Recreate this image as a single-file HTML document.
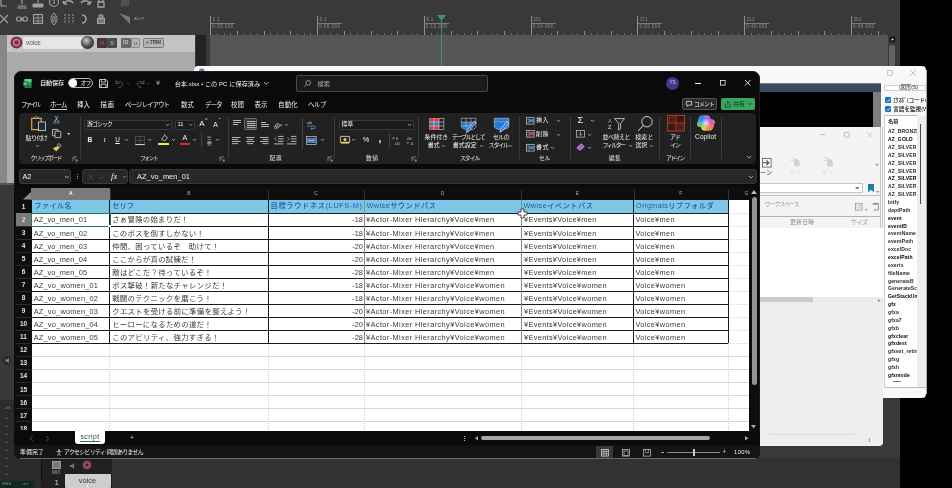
<!DOCTYPE html>
<html lang="ja"><head><meta charset="utf-8"><title>screen</title>
<style>
html,body{margin:0;padding:0;background:#000;}
body{width:952px;height:488px;overflow:hidden;position:relative;font-family:"Liberation Sans","Noto Sans CJK JP",sans-serif;}
#s{will-change:transform;position:absolute;left:0;top:0;width:952px;height:488px;overflow:hidden;background:#000;}
#s div,#s svg{position:absolute;box-sizing:border-box;}
#s svg{overflow:visible;}
</style></head><body><div id="s">
<div style="left:0.00px;top:0.00px;width:899.50px;height:488.00px;background:#393939;"></div>
<div style="left:210.00px;top:34.50px;width:677.80px;height:32.00px;background:#565656;"></div>
<div style="left:210.20px;top:16.00px;width:0.90px;height:18.70px;background:#909090;"></div>
<div style="top:16.55px;height:6.9px;line-height:6.9px;font-size:4.6px;color:#8e8e8e;white-space:pre;letter-spacing:0.370px;left:212.60px;">1.1</div>
<div style="top:23.85px;height:6.9px;line-height:6.9px;font-size:4.6px;color:#8e8e8e;white-space:pre;letter-spacing:0.451px;left:212.20px;">0:00.000</div>
<div style="left:210.60px;top:23.10px;width:24.50px;height:0.70px;background:#7c7c7c;"></div>
<div style="left:216.97px;top:32.60px;width:0.70px;height:2.10px;background:#6a6a6a;"></div>
<div style="left:223.65px;top:32.60px;width:0.70px;height:2.10px;background:#6a6a6a;"></div>
<div style="left:230.32px;top:32.60px;width:0.70px;height:2.10px;background:#6a6a6a;"></div>
<div style="left:237.00px;top:31.00px;width:0.70px;height:3.70px;background:#8a8a8a;"></div>
<div style="left:243.67px;top:32.60px;width:0.70px;height:2.10px;background:#6a6a6a;"></div>
<div style="left:250.35px;top:32.60px;width:0.70px;height:2.10px;background:#6a6a6a;"></div>
<div style="left:257.02px;top:32.60px;width:0.70px;height:2.10px;background:#6a6a6a;"></div>
<div style="left:263.70px;top:31.00px;width:0.70px;height:3.70px;background:#8a8a8a;"></div>
<div style="left:270.38px;top:32.60px;width:0.70px;height:2.10px;background:#6a6a6a;"></div>
<div style="left:277.05px;top:32.60px;width:0.70px;height:2.10px;background:#6a6a6a;"></div>
<div style="left:283.72px;top:32.60px;width:0.70px;height:2.10px;background:#6a6a6a;"></div>
<div style="left:290.40px;top:31.00px;width:0.70px;height:3.70px;background:#8a8a8a;"></div>
<div style="left:297.07px;top:32.60px;width:0.70px;height:2.10px;background:#6a6a6a;"></div>
<div style="left:303.75px;top:32.60px;width:0.70px;height:2.10px;background:#6a6a6a;"></div>
<div style="left:310.43px;top:32.60px;width:0.70px;height:2.10px;background:#6a6a6a;"></div>
<div style="left:317.00px;top:16.00px;width:0.90px;height:18.70px;background:#909090;"></div>
<div style="top:16.55px;height:6.9px;line-height:6.9px;font-size:4.6px;color:#8e8e8e;white-space:pre;letter-spacing:0.370px;left:319.40px;">5.1</div>
<div style="top:23.85px;height:6.9px;line-height:6.9px;font-size:4.6px;color:#8e8e8e;white-space:pre;letter-spacing:0.451px;left:319.00px;">0:08.000</div>
<div style="left:317.40px;top:23.10px;width:24.50px;height:0.70px;background:#7c7c7c;"></div>
<div style="left:323.77px;top:32.60px;width:0.70px;height:2.10px;background:#6a6a6a;"></div>
<div style="left:330.45px;top:32.60px;width:0.70px;height:2.10px;background:#6a6a6a;"></div>
<div style="left:337.12px;top:32.60px;width:0.70px;height:2.10px;background:#6a6a6a;"></div>
<div style="left:343.80px;top:31.00px;width:0.70px;height:3.70px;background:#8a8a8a;"></div>
<div style="left:350.47px;top:32.60px;width:0.70px;height:2.10px;background:#6a6a6a;"></div>
<div style="left:357.15px;top:32.60px;width:0.70px;height:2.10px;background:#6a6a6a;"></div>
<div style="left:363.82px;top:32.60px;width:0.70px;height:2.10px;background:#6a6a6a;"></div>
<div style="left:370.50px;top:31.00px;width:0.70px;height:3.70px;background:#8a8a8a;"></div>
<div style="left:377.17px;top:32.60px;width:0.70px;height:2.10px;background:#6a6a6a;"></div>
<div style="left:383.85px;top:32.60px;width:0.70px;height:2.10px;background:#6a6a6a;"></div>
<div style="left:390.52px;top:32.60px;width:0.70px;height:2.10px;background:#6a6a6a;"></div>
<div style="left:397.20px;top:31.00px;width:0.70px;height:3.70px;background:#8a8a8a;"></div>
<div style="left:403.87px;top:32.60px;width:0.70px;height:2.10px;background:#6a6a6a;"></div>
<div style="left:410.55px;top:32.60px;width:0.70px;height:2.10px;background:#6a6a6a;"></div>
<div style="left:417.22px;top:32.60px;width:0.70px;height:2.10px;background:#6a6a6a;"></div>
<div style="left:423.80px;top:16.00px;width:0.90px;height:18.70px;background:#909090;"></div>
<div style="top:16.55px;height:6.9px;line-height:6.9px;font-size:4.6px;color:#8e8e8e;white-space:pre;letter-spacing:0.370px;left:426.20px;">9.1</div>
<div style="top:23.85px;height:6.9px;line-height:6.9px;font-size:4.6px;color:#8e8e8e;white-space:pre;letter-spacing:0.451px;left:425.80px;">0:16.000</div>
<div style="left:424.20px;top:23.10px;width:24.50px;height:0.70px;background:#7c7c7c;"></div>
<div style="left:430.57px;top:32.60px;width:0.70px;height:2.10px;background:#6a6a6a;"></div>
<div style="left:437.25px;top:32.60px;width:0.70px;height:2.10px;background:#6a6a6a;"></div>
<div style="left:443.92px;top:32.60px;width:0.70px;height:2.10px;background:#6a6a6a;"></div>
<div style="left:450.60px;top:31.00px;width:0.70px;height:3.70px;background:#8a8a8a;"></div>
<div style="left:457.27px;top:32.60px;width:0.70px;height:2.10px;background:#6a6a6a;"></div>
<div style="left:463.95px;top:32.60px;width:0.70px;height:2.10px;background:#6a6a6a;"></div>
<div style="left:470.62px;top:32.60px;width:0.70px;height:2.10px;background:#6a6a6a;"></div>
<div style="left:477.30px;top:31.00px;width:0.70px;height:3.70px;background:#8a8a8a;"></div>
<div style="left:483.97px;top:32.60px;width:0.70px;height:2.10px;background:#6a6a6a;"></div>
<div style="left:490.65px;top:32.60px;width:0.70px;height:2.10px;background:#6a6a6a;"></div>
<div style="left:497.32px;top:32.60px;width:0.70px;height:2.10px;background:#6a6a6a;"></div>
<div style="left:504.00px;top:31.00px;width:0.70px;height:3.70px;background:#8a8a8a;"></div>
<div style="left:510.67px;top:32.60px;width:0.70px;height:2.10px;background:#6a6a6a;"></div>
<div style="left:517.35px;top:32.60px;width:0.70px;height:2.10px;background:#6a6a6a;"></div>
<div style="left:524.03px;top:32.60px;width:0.70px;height:2.10px;background:#6a6a6a;"></div>
<div style="left:530.60px;top:16.00px;width:0.90px;height:18.70px;background:#909090;"></div>
<div style="top:16.55px;height:6.9px;line-height:6.9px;font-size:4.6px;color:#8e8e8e;white-space:pre;letter-spacing:-0.363px;left:533.00px;">13.1</div>
<div style="top:23.85px;height:6.9px;line-height:6.9px;font-size:4.6px;color:#8e8e8e;white-space:pre;letter-spacing:0.451px;left:532.60px;">0:24.000</div>
<div style="left:531.00px;top:23.10px;width:24.50px;height:0.70px;background:#7c7c7c;"></div>
<div style="left:537.38px;top:32.60px;width:0.70px;height:2.10px;background:#6a6a6a;"></div>
<div style="left:544.05px;top:32.60px;width:0.70px;height:2.10px;background:#6a6a6a;"></div>
<div style="left:550.73px;top:32.60px;width:0.70px;height:2.10px;background:#6a6a6a;"></div>
<div style="left:557.40px;top:31.00px;width:0.70px;height:3.70px;background:#8a8a8a;"></div>
<div style="left:564.08px;top:32.60px;width:0.70px;height:2.10px;background:#6a6a6a;"></div>
<div style="left:570.75px;top:32.60px;width:0.70px;height:2.10px;background:#6a6a6a;"></div>
<div style="left:577.43px;top:32.60px;width:0.70px;height:2.10px;background:#6a6a6a;"></div>
<div style="left:584.10px;top:31.00px;width:0.70px;height:3.70px;background:#8a8a8a;"></div>
<div style="left:590.78px;top:32.60px;width:0.70px;height:2.10px;background:#6a6a6a;"></div>
<div style="left:597.45px;top:32.60px;width:0.70px;height:2.10px;background:#6a6a6a;"></div>
<div style="left:604.12px;top:32.60px;width:0.70px;height:2.10px;background:#6a6a6a;"></div>
<div style="left:610.80px;top:31.00px;width:0.70px;height:3.70px;background:#8a8a8a;"></div>
<div style="left:617.48px;top:32.60px;width:0.70px;height:2.10px;background:#6a6a6a;"></div>
<div style="left:624.15px;top:32.60px;width:0.70px;height:2.10px;background:#6a6a6a;"></div>
<div style="left:630.83px;top:32.60px;width:0.70px;height:2.10px;background:#6a6a6a;"></div>
<div style="left:637.40px;top:16.00px;width:0.90px;height:18.70px;background:#909090;"></div>
<div style="top:16.55px;height:6.9px;line-height:6.9px;font-size:4.6px;color:#8e8e8e;white-space:pre;letter-spacing:-0.363px;left:639.80px;">17.1</div>
<div style="top:23.85px;height:6.9px;line-height:6.9px;font-size:4.6px;color:#8e8e8e;white-space:pre;letter-spacing:0.451px;left:639.40px;">0:32.000</div>
<div style="left:637.80px;top:23.10px;width:24.50px;height:0.70px;background:#7c7c7c;"></div>
<div style="left:644.17px;top:32.60px;width:0.70px;height:2.10px;background:#6a6a6a;"></div>
<div style="left:650.85px;top:32.60px;width:0.70px;height:2.10px;background:#6a6a6a;"></div>
<div style="left:657.52px;top:32.60px;width:0.70px;height:2.10px;background:#6a6a6a;"></div>
<div style="left:664.20px;top:31.00px;width:0.70px;height:3.70px;background:#8a8a8a;"></div>
<div style="left:670.88px;top:32.60px;width:0.70px;height:2.10px;background:#6a6a6a;"></div>
<div style="left:677.55px;top:32.60px;width:0.70px;height:2.10px;background:#6a6a6a;"></div>
<div style="left:684.23px;top:32.60px;width:0.70px;height:2.10px;background:#6a6a6a;"></div>
<div style="left:690.90px;top:31.00px;width:0.70px;height:3.70px;background:#8a8a8a;"></div>
<div style="left:697.58px;top:32.60px;width:0.70px;height:2.10px;background:#6a6a6a;"></div>
<div style="left:704.25px;top:32.60px;width:0.70px;height:2.10px;background:#6a6a6a;"></div>
<div style="left:710.92px;top:32.60px;width:0.70px;height:2.10px;background:#6a6a6a;"></div>
<div style="left:717.60px;top:31.00px;width:0.70px;height:3.70px;background:#8a8a8a;"></div>
<div style="left:724.27px;top:32.60px;width:0.70px;height:2.10px;background:#6a6a6a;"></div>
<div style="left:730.95px;top:32.60px;width:0.70px;height:2.10px;background:#6a6a6a;"></div>
<div style="left:737.62px;top:32.60px;width:0.70px;height:2.10px;background:#6a6a6a;"></div>
<div style="left:744.20px;top:16.00px;width:0.90px;height:18.70px;background:#909090;"></div>
<div style="top:16.55px;height:6.9px;line-height:6.9px;font-size:4.6px;color:#8e8e8e;white-space:pre;letter-spacing:-0.363px;left:746.60px;">21.1</div>
<div style="top:23.85px;height:6.9px;line-height:6.9px;font-size:4.6px;color:#8e8e8e;white-space:pre;letter-spacing:0.451px;left:746.20px;">0:40.000</div>
<div style="left:744.60px;top:23.10px;width:24.50px;height:0.70px;background:#7c7c7c;"></div>
<div style="left:750.98px;top:32.60px;width:0.70px;height:2.10px;background:#6a6a6a;"></div>
<div style="left:757.65px;top:32.60px;width:0.70px;height:2.10px;background:#6a6a6a;"></div>
<div style="left:764.33px;top:32.60px;width:0.70px;height:2.10px;background:#6a6a6a;"></div>
<div style="left:771.00px;top:31.00px;width:0.70px;height:3.70px;background:#8a8a8a;"></div>
<div style="left:777.68px;top:32.60px;width:0.70px;height:2.10px;background:#6a6a6a;"></div>
<div style="left:784.35px;top:32.60px;width:0.70px;height:2.10px;background:#6a6a6a;"></div>
<div style="left:791.03px;top:32.60px;width:0.70px;height:2.10px;background:#6a6a6a;"></div>
<div style="left:797.70px;top:31.00px;width:0.70px;height:3.70px;background:#8a8a8a;"></div>
<div style="left:804.38px;top:32.60px;width:0.70px;height:2.10px;background:#6a6a6a;"></div>
<div style="left:811.05px;top:32.60px;width:0.70px;height:2.10px;background:#6a6a6a;"></div>
<div style="left:817.73px;top:32.60px;width:0.70px;height:2.10px;background:#6a6a6a;"></div>
<div style="left:824.40px;top:31.00px;width:0.70px;height:3.70px;background:#8a8a8a;"></div>
<div style="left:831.08px;top:32.60px;width:0.70px;height:2.10px;background:#6a6a6a;"></div>
<div style="left:837.75px;top:32.60px;width:0.70px;height:2.10px;background:#6a6a6a;"></div>
<div style="left:844.43px;top:32.60px;width:0.70px;height:2.10px;background:#6a6a6a;"></div>
<div style="left:851.00px;top:16.00px;width:0.90px;height:18.70px;background:#909090;"></div>
<div style="top:16.55px;height:6.9px;line-height:6.9px;font-size:4.6px;color:#8e8e8e;white-space:pre;letter-spacing:-0.363px;left:853.40px;">25.1</div>
<div style="top:23.85px;height:6.9px;line-height:6.9px;font-size:4.6px;color:#8e8e8e;white-space:pre;letter-spacing:0.451px;left:853.00px;">0:48.000</div>
<div style="left:851.40px;top:23.10px;width:24.50px;height:0.70px;background:#7c7c7c;"></div>
<div style="left:857.77px;top:32.60px;width:0.70px;height:2.10px;background:#6a6a6a;"></div>
<div style="left:864.45px;top:32.60px;width:0.70px;height:2.10px;background:#6a6a6a;"></div>
<div style="left:871.12px;top:32.60px;width:0.70px;height:2.10px;background:#6a6a6a;"></div>
<div style="left:877.80px;top:31.00px;width:0.70px;height:3.70px;background:#8a8a8a;"></div>
<div style="left:884.48px;top:32.60px;width:0.70px;height:2.10px;background:#6a6a6a;"></div>
<div style="left:440.60px;top:19.00px;width:1.00px;height:47.50px;background:#3f8f7c;"></div>
<svg style="left:436.50px;top:15.00px;" width="9" height="6" viewBox="0 0 9 6"><polygon points="0,0 9,0 4.5,6" fill="#3f8f7c"/></svg>
<div style="left:889.00px;top:45.00px;width:6.00px;height:21.50px;background:#626262;border-radius:2px 2px 0 0;"></div>
<svg style="left:888.50px;top:35.80px;" width="7" height="7" viewBox="0 0 7 7"><circle cx="3.5" cy="3.5" r="2.9" fill="#111"/><circle cx="3.5" cy="3.5" r="1.1" fill="#e8e8e8"/></svg>
<div style="left:195.50px;top:34.50px;width:10.00px;height:32.00px;background:#222;"></div>
<div style="left:0.00px;top:34.50px;width:7.00px;height:150.00px;background:#878787;"></div>
<div style="left:6.70px;top:34.50px;width:188.80px;height:150.00px;background:#a9abab;"></div>
<div style="left:6.70px;top:34.50px;width:188.80px;height:17.50px;background:#c3c5c5;"></div>
<div style="left:0.00px;top:184.50px;width:15.00px;height:304.00px;background:#383838;"></div>
<div style="left:0.00px;top:182.50px;width:15.00px;height:2.00px;background:#555;"></div>
<svg style="left:9.50px;top:35.50px;" width="13" height="13" viewBox="0 0 13 13"><circle cx="6.5" cy="6.5" r="6" fill="#7d2f45"/><circle cx="6.5" cy="6.5" r="3" fill="none" stroke="#c9809a" stroke-width="1.3"/></svg>
<div style="left:22.50px;top:37.00px;width:61.00px;height:12.00px;background:#e6e6e6;border-radius:1px;"></div>
<div style="top:38.20px;height:9.6px;line-height:9.6px;font-size:6.4px;color:#555;white-space:pre;left:26.00px;">voice</div>
<svg style="left:80.50px;top:35.50px;" width="13" height="13" viewBox="0 0 13 13"><defs><radialGradient id="kn" cx="0.4" cy="0.35" r="0.7"><stop offset="0" stop-color="#cfcfcf"/><stop offset="0.5" stop-color="#6a6a6a"/><stop offset="1" stop-color="#222"/></radialGradient></defs><circle cx="6.5" cy="6.5" r="6.2" fill="url(#kn)" stroke="#333" stroke-width="0.6"/></svg>
<div style="left:97.00px;top:37.50px;width:9.50px;height:10.50px;background:#3a3a3a;border-radius:1px;"></div>
<div style="top:38.88px;height:8.25px;line-height:8.25px;font-size:5.5px;color:#c0304a;white-space:pre;font-weight:700;left:99.40px;">M</div>
<div style="left:107.00px;top:37.50px;width:10.00px;height:10.50px;background:#4a4a4a;border-radius:1px;"></div>
<div style="top:38.88px;height:8.25px;line-height:8.25px;font-size:5.5px;color:#aaa;white-space:pre;font-weight:700;left:110.16px;">S</div>
<div style="left:121.00px;top:37.50px;width:9.50px;height:10.50px;background:#666;border-radius:1px;"></div>
<div style="top:39.25px;height:7.5px;line-height:7.5px;font-size:5px;color:#ccc;white-space:pre;font-weight:700;left:123.06px;">IO</div>
<div style="left:131.00px;top:37.50px;width:9.00px;height:10.50px;background:#b5b5b5;border-radius:1px;border:0.5px solid #888;"></div>
<div style="top:38.88px;height:8.25px;line-height:8.25px;font-size:5.5px;color:#444;white-space:pre;left:133.97px;">u</div>
<div style="left:143.00px;top:37.50px;width:20.50px;height:10.50px;background:#b5b5b5;border-radius:1.5px;border:0.6px solid #777;"></div>
<div style="top:39.55px;height:6.9px;line-height:6.9px;font-size:4.6px;color:#444;white-space:pre;font-weight:700;left:145.29px;">∧TRIM</div>
<svg style="left:-1.00px;top:-1.80px;" width="12" height="12" viewBox="0 0 12 12"><path d="M2 0v8h6" fill="none" stroke="#a2a2a2" stroke-width="1.2"/></svg>
<svg style="left:16.00px;top:-1.80px;" width="12" height="12" viewBox="0 0 12 12"><path d="M6 0v6M2 8h8M1 10h10" fill="none" stroke="#a2a2a2" stroke-width="1.2"/></svg>
<svg style="left:32.00px;top:-1.80px;" width="12" height="12" viewBox="0 0 12 12"><path d="M6 0v5M1 9h10v-3h-10z" fill="#a2a2a2" stroke="#a2a2a2" stroke-width="1"/></svg>
<svg style="left:47.50px;top:-1.80px;" width="12" height="12" viewBox="0 0 12 12"><circle cx="6" cy="4" r="4.5" fill="none" stroke="#a2a2a2" stroke-width="1.1"/><path d="M6 2v4" stroke="#a2a2a2" stroke-width="1.2"/></svg>
<svg style="left:62.00px;top:-1.80px;" width="12" height="12" viewBox="0 0 12 12"><path d="M2 6c1-4 7-4 9-1M2 6l-1-3M2 6l3 0" fill="none" stroke="#a2a2a2" stroke-width="1.5"/></svg>
<svg style="left:80.00px;top:-1.80px;" width="12" height="12" viewBox="0 0 12 12"><path d="M10 6c-1-4-7-4-9-1M10 6l1-3M10 6l-3 0" fill="none" stroke="#a2a2a2" stroke-width="1.5"/></svg>
<svg style="left:94.50px;top:-1.80px;" width="12" height="12" viewBox="0 0 12 12"><path d="M3 4h6v5h-6zM4 4v-2a2 2 0 0 1 4 0v2" fill="none" stroke="#a2a2a2" stroke-width="1.3"/></svg>
<svg style="left:118.50px;top:-1.80px;" width="12" height="12" viewBox="0 0 12 12"><rect x="2" y="0" width="8" height="8" fill="#5a5a5a"/><path d="M2 3h8M2 6h8M5 0v8M8 0v8" stroke="#444" stroke-width="0.6"/></svg>
<svg style="left:0.00px;top:13.30px;" width="12" height="12" viewBox="0 0 12 12"><path d="M0 2l8 8M8 2l-8 8" stroke="#a2a2a2" stroke-width="1.1" fill="none"/></svg>
<svg style="left:16.00px;top:13.00px;" width="12" height="12" viewBox="0 0 12 12"><rect x="0.5" y="4" width="5" height="4" rx="2" fill="none" stroke="#a2a2a2" stroke-width="1.1"/><rect x="6.5" y="4" width="5" height="4" rx="2" fill="none" stroke="#a2a2a2" stroke-width="1.1"/><path d="M4 6h4" stroke="#a2a2a2" stroke-width="1"/></svg>
<svg style="left:32.00px;top:13.00px;" width="12" height="12" viewBox="0 0 12 12"><rect x="1.5" y="1.5" width="9" height="9" fill="none" stroke="#a2a2a2" stroke-width="1.1"/><path d="M1.5 5h9M1.5 8h9M6 1.5v9" stroke="#a2a2a2" stroke-width="0.9"/></svg>
<svg style="left:47.50px;top:13.30px;" width="12" height="12" viewBox="0 0 12 12"><path d="M6 0l-3 4h6zM6 12l-3-4h6zM2 6h8" fill="none" stroke="#a2a2a2" stroke-width="1"/></svg>
<svg style="left:62.50px;top:13.30px;" width="12" height="12" viewBox="0 0 12 12"><path d="M2 1v10M6 1v10M10 1v10" stroke="#a2a2a2" stroke-width="1" stroke-dasharray="2 1.2"/></svg>
<svg style="left:78.00px;top:13.00px;" width="12" height="12" viewBox="0 0 12 12"><path d="M4 2a4 4 0 1 1 0 8" fill="none" stroke="#a2a2a2" stroke-width="1.6"/></svg>
<svg style="left:94.50px;top:13.30px;" width="12" height="12" viewBox="0 0 12 12"><path d="M2.5 5.5h7v5h-7zM4 5.5v-2a2 2 0 0 1 4 0v2" fill="#a2a2a2" stroke="#a2a2a2" stroke-width="1.1" fill-opacity="0.6"/></svg>
<svg style="left:119.00px;top:13.30px;" width="12" height="12" viewBox="0 0 12 12"><path d="M0 0l11 4v7z" fill="#777"/></svg>
<div style="top:16.00px;height:6.6px;line-height:6.6px;font-size:4.4px;color:#9a9a9a;white-space:pre;letter-spacing:0.246px;left:134.00px;">ADIT</div>
<div style="left:0.00px;top:458.00px;width:899.50px;height:30.00px;background:#323232;"></div>
<div style="left:0.00px;top:458.00px;width:41.00px;height:30.00px;background:#2a2a2a;"></div>
<div style="left:41.00px;top:458.00px;width:71.00px;height:30.00px;background:#202020;"></div>
<div style="left:40.80px;top:459.00px;width:1.00px;height:21.00px;background:#0c0c0c;"></div>
<div style="left:51.50px;top:460.50px;width:9.00px;height:8.00px;background:#7a7a7a;border:0.6px solid #999;"></div>
<div style="top:469.85px;height:6.9px;line-height:6.9px;font-size:4.6px;color:#a8a8a8;white-space:pre;letter-spacing:0.109px;left:52.05px;">MIX</div>
<div style="top:477.30px;height:12.0px;line-height:12.0px;font-size:8px;color:#cfcfcf;white-space:pre;left:54.57px;">1</div>
<svg style="left:70.00px;top:462.50px;" width="6" height="6" viewBox="0 0 6 6"><path d="M0 2h2l2-2v6l-2-2h-2z" fill="#777"/></svg>
<svg style="left:82.00px;top:460.00px;" width="10" height="10" viewBox="0 0 10 10"><circle cx="5" cy="5" r="4.6" fill="#7a3a52"/><circle cx="5" cy="5" r="2.3" fill="#3a1a26" stroke="#b07a90" stroke-width="1"/></svg>
<div style="left:65.00px;top:474.00px;width:46.00px;height:14.00px;background:#cdcdcd;border-radius:1px;"></div>
<div style="left:86.50px;top:485.30px;width:1.60px;height:1.60px;background:#fff;border-radius:1px;"></div>
<div style="top:475.05px;height:11.1px;line-height:11.1px;font-size:7.4px;color:#3a3a3a;white-space:pre;letter-spacing:-0.013px;left:78.80px;">voice</div>
<div style="left:0.00px;top:480.50px;width:34.00px;height:7.50px;background:#12281f;"></div>
<div style="top:481.15px;height:6.3px;line-height:6.3px;font-size:4.2px;color:#3fae7c;white-space:pre;left:2.00px;">RMS</div>
<div style="top:481.15px;height:6.3px;line-height:6.3px;font-size:4.2px;color:#3fae7c;white-space:pre;left:22.00px;">-inf</div>
<svg style="left:1.50px;top:355.50px;" width="9" height="9" viewBox="0 0 9 9"><circle cx="4.5" cy="4.5" r="4" fill="#222"/><path d="M3 2.5v4M6.5 2.5l-2.5 2l2.5 2z" stroke="#999" fill="#999" stroke-width="0.6"/></svg>
<div style="left:0.00px;top:400.00px;width:15.00px;height:58.00px;background:#2b2b2b;"></div>
<div style="top:406.30px;height:5.4px;line-height:5.4px;font-size:3.6px;color:#8a8a8a;white-space:pre;left:5.00px;">-inf</div>
<div style="top:414.62px;height:6.75px;line-height:6.75px;font-size:4.5px;color:#6a6a6a;white-space:pre;left:1.50px;">-</div>
<div style="left:5.00px;top:417.70px;width:2.50px;height:0.60px;background:#5a5a5a;"></div>
<div style="top:422.62px;height:6.75px;line-height:6.75px;font-size:4.5px;color:#6a6a6a;white-space:pre;left:1.50px;">-</div>
<div style="left:5.00px;top:425.70px;width:2.50px;height:0.60px;background:#5a5a5a;"></div>
<div style="top:430.62px;height:6.75px;line-height:6.75px;font-size:4.5px;color:#6a6a6a;white-space:pre;left:1.50px;">-</div>
<div style="left:5.00px;top:433.70px;width:2.50px;height:0.60px;background:#5a5a5a;"></div>
<div style="top:438.62px;height:6.75px;line-height:6.75px;font-size:4.5px;color:#6a6a6a;white-space:pre;left:1.50px;">-</div>
<div style="left:5.00px;top:441.70px;width:2.50px;height:0.60px;background:#5a5a5a;"></div>
<div style="top:446.62px;height:6.75px;line-height:6.75px;font-size:4.5px;color:#6a6a6a;white-space:pre;left:1.50px;">-</div>
<div style="left:5.00px;top:449.70px;width:2.50px;height:0.60px;background:#5a5a5a;"></div>
<div style="top:454.62px;height:6.75px;line-height:6.75px;font-size:4.5px;color:#6a6a6a;white-space:pre;left:1.50px;">-</div>
<div style="left:5.00px;top:457.70px;width:2.50px;height:0.60px;background:#5a5a5a;"></div>
<div style="top:462.62px;height:6.75px;line-height:6.75px;font-size:4.5px;color:#6a6a6a;white-space:pre;left:1.50px;">-</div>
<div style="left:5.00px;top:465.70px;width:2.50px;height:0.60px;background:#5a5a5a;"></div>
<div style="top:470.62px;height:6.75px;line-height:6.75px;font-size:4.5px;color:#6a6a6a;white-space:pre;left:1.50px;">-</div>
<div style="left:5.00px;top:473.70px;width:2.50px;height:0.60px;background:#5a5a5a;"></div>
<div style="left:193.80px;top:66.00px;width:732.20px;height:332.30px;background:#f8f8f8;border-radius:4px 4px 4px 4px;"></div>
<svg style="left:199.00px;top:68.40px;" width="5.4" height="3" viewBox="0 0 5.4 3"><ellipse cx="2.7" cy="2.4" rx="2.7" ry="1.8" fill="#5a7fb4"/></svg>
<svg style="left:886.50px;top:70.00px;" width="6" height="6" viewBox="0 0 6 6"><rect x="0.5" y="0.5" width="5" height="5" rx="0.8" fill="none" stroke="#b5b5b5" stroke-width="0.8"/></svg>
<svg style="left:910.00px;top:70.00px;" width="6" height="6" viewBox="0 0 6 6"><path d="M0 0l6 6M6 0l-6 6" stroke="#b5b5b5" stroke-width="0.8"/></svg>
<div style="left:759.00px;top:83.40px;width:121.50px;height:8.40px;background:#3b4a5e;border-top:1.2px solid #76869a;"></div>
<div style="left:759.00px;top:91.80px;width:114.00px;height:34.80px;background:#000;"></div>
<div style="left:873.00px;top:91.80px;width:7.50px;height:34.80px;background:#7d7d7d;"></div>
<div style="left:884.00px;top:84.70px;width:42.00px;height:6.80px;background:#fdfdfd;border:0.6px solid #cfcfcf;border-radius:1px;"></div>
<div style="top:84.20px;height:7.8px;line-height:7.8px;font-size:5.2px;color:#222;white-space:pre;letter-spacing:-0.005px;left:899.10px;">(図形(S)</div>
<div style="left:884.70px;top:96.60px;width:6.60px;height:6.60px;background:#1b6ec2;border-radius:1.2px;"></div>
<svg style="left:885.70px;top:97.70px;" width="4.6" height="4.4" viewBox="0 0 4.6 4.4"><path d="M0.6 2.3l1.3 1.3l2.2-2.8" fill="none" stroke="#fff" stroke-width="0.8"/></svg>
<div style="top:95.70px;height:8.4px;line-height:8.4px;font-size:5.6px;color:#111;white-space:pre;font-weight:500;letter-spacing:-0.112px;left:893.20px;">ｴｸｽﾎﾟ(コード(P</div>
<div style="left:884.70px;top:105.80px;width:6.60px;height:6.60px;background:#1b6ec2;border-radius:1.2px;"></div>
<svg style="left:885.70px;top:106.90px;" width="4.6" height="4.4" viewBox="0 0 4.6 4.4"><path d="M0.6 2.3l1.3 1.3l2.2-2.8" fill="none" stroke="#fff" stroke-width="0.8"/></svg>
<div style="top:104.90px;height:8.4px;line-height:8.4px;font-size:5.6px;color:#111;white-space:pre;font-weight:500;letter-spacing:0.002px;left:893.20px;">言語を監視(W)</div>
<div style="left:884.30px;top:115.30px;width:32.50px;height:272.00px;background:#fff;border-top:0.6px solid #bbb;border-left:0.6px solid #ccc;"></div>
<div style="top:118.12px;height:7.35px;line-height:7.35px;font-size:4.9px;color:#111;white-space:pre;font-weight:700;letter-spacing:0.002px;left:888.30px;">名前</div>
<div style="top:128.25px;height:7.5px;line-height:7.5px;font-size:5.0px;color:#2a2a2a;white-space:pre;font-weight:700;left:888.00px;letter-spacing:0.14px;">AZ_BRONZE</div>
<div style="top:136.11px;height:7.5px;line-height:7.5px;font-size:5.0px;color:#000;white-space:pre;font-weight:700;left:888.00px;letter-spacing:0.14px;">AZ_GOLD</div>
<div style="top:143.97px;height:7.5px;line-height:7.5px;font-size:5.0px;color:#2a2a2a;white-space:pre;font-weight:700;left:888.00px;letter-spacing:0.14px;">AZ_SILVER</div>
<div style="top:151.83px;height:7.5px;line-height:7.5px;font-size:5.0px;color:#2a2a2a;white-space:pre;font-weight:700;left:888.00px;letter-spacing:0.14px;">AZ_SILVER</div>
<div style="top:159.69px;height:7.5px;line-height:7.5px;font-size:5.0px;color:#2a2a2a;white-space:pre;font-weight:700;left:888.00px;letter-spacing:0.14px;">AZ_SILVER</div>
<div style="top:167.55px;height:7.5px;line-height:7.5px;font-size:5.0px;color:#2a2a2a;white-space:pre;font-weight:700;left:888.00px;letter-spacing:0.14px;">AZ_SILVER</div>
<div style="top:175.41px;height:7.5px;line-height:7.5px;font-size:5.0px;color:#000;white-space:pre;font-weight:700;left:888.00px;letter-spacing:0.14px;">AZ_SILVER</div>
<div style="top:183.27px;height:7.5px;line-height:7.5px;font-size:5.0px;color:#2a2a2a;white-space:pre;font-weight:700;left:888.00px;letter-spacing:0.14px;">AZ_SILVER</div>
<div style="top:191.13px;height:7.5px;line-height:7.5px;font-size:5.0px;color:#2a2a2a;white-space:pre;font-weight:700;left:888.00px;letter-spacing:0.14px;">AZ_SILVER</div>
<div style="top:198.99px;height:7.5px;line-height:7.5px;font-size:5.0px;color:#2a2a2a;white-space:pre;font-weight:700;left:888.00px;letter-spacing:0.14px;">bitfy</div>
<div style="top:206.85px;height:7.5px;line-height:7.5px;font-size:5.0px;color:#2a2a2a;white-space:pre;font-weight:700;left:888.00px;letter-spacing:0.14px;">deptPath</div>
<div style="top:214.71px;height:7.5px;line-height:7.5px;font-size:5.0px;color:#000;white-space:pre;font-weight:700;left:888.00px;letter-spacing:0.14px;">event</div>
<div style="top:222.57px;height:7.5px;line-height:7.5px;font-size:5.0px;color:#000;white-space:pre;font-weight:700;left:888.00px;letter-spacing:0.14px;">eventID</div>
<div style="top:230.43px;height:7.5px;line-height:7.5px;font-size:5.0px;color:#2a2a2a;white-space:pre;font-weight:700;left:888.00px;letter-spacing:0.14px;">eventName</div>
<div style="top:238.29px;height:7.5px;line-height:7.5px;font-size:5.0px;color:#2a2a2a;white-space:pre;font-weight:700;left:888.00px;letter-spacing:0.14px;">eventPath</div>
<div style="top:246.15px;height:7.5px;line-height:7.5px;font-size:5.0px;color:#2a2a2a;white-space:pre;font-weight:700;left:888.00px;letter-spacing:0.14px;">excelDoc</div>
<div style="top:254.01px;height:7.5px;line-height:7.5px;font-size:5.0px;color:#000;white-space:pre;font-weight:700;left:888.00px;letter-spacing:0.14px;">excelPath</div>
<div style="top:261.87px;height:7.5px;line-height:7.5px;font-size:5.0px;color:#2a2a2a;white-space:pre;font-weight:700;left:888.00px;letter-spacing:0.14px;">exerts</div>
<div style="top:269.73px;height:7.5px;line-height:7.5px;font-size:5.0px;color:#2a2a2a;white-space:pre;font-weight:700;left:888.00px;letter-spacing:0.14px;">fileName</div>
<div style="top:277.59px;height:7.5px;line-height:7.5px;font-size:5.0px;color:#2a2a2a;white-space:pre;font-weight:700;left:888.00px;letter-spacing:0.14px;">generateB</div>
<div style="top:285.45px;height:7.5px;line-height:7.5px;font-size:5.0px;color:#2a2a2a;white-space:pre;font-weight:700;left:888.00px;letter-spacing:0.14px;">GenerateSc</div>
<div style="top:293.31px;height:7.5px;line-height:7.5px;font-size:5.0px;color:#000;white-space:pre;font-weight:700;left:888.00px;letter-spacing:0.14px;">GetStackUn</div>
<div style="top:301.17px;height:7.5px;line-height:7.5px;font-size:5.0px;color:#000;white-space:pre;font-weight:700;left:888.00px;letter-spacing:0.14px;">gfx</div>
<div style="top:309.03px;height:7.5px;line-height:7.5px;font-size:5.0px;color:#2a2a2a;white-space:pre;font-weight:700;left:888.00px;letter-spacing:0.14px;">gfxa</div>
<div style="top:316.89px;height:7.5px;line-height:7.5px;font-size:5.0px;color:#2a2a2a;white-space:pre;font-weight:700;left:888.00px;letter-spacing:0.14px;">gfxa7</div>
<div style="top:324.75px;height:7.5px;line-height:7.5px;font-size:5.0px;color:#2a2a2a;white-space:pre;font-weight:700;left:888.00px;letter-spacing:0.14px;">gfxb</div>
<div style="top:332.61px;height:7.5px;line-height:7.5px;font-size:5.0px;color:#000;white-space:pre;font-weight:700;left:888.00px;letter-spacing:0.14px;">gfxclear</div>
<div style="top:340.47px;height:7.5px;line-height:7.5px;font-size:5.0px;color:#000;white-space:pre;font-weight:700;left:888.00px;letter-spacing:0.14px;">gfxdest</div>
<div style="top:348.33px;height:7.5px;line-height:7.5px;font-size:5.0px;color:#2a2a2a;white-space:pre;font-weight:700;left:888.00px;letter-spacing:0.14px;">gfxext_retin</div>
<div style="top:356.19px;height:7.5px;line-height:7.5px;font-size:5.0px;color:#2a2a2a;white-space:pre;font-weight:700;left:888.00px;letter-spacing:0.14px;">gfxg</div>
<div style="top:364.05px;height:7.5px;line-height:7.5px;font-size:5.0px;color:#2a2a2a;white-space:pre;font-weight:700;left:888.00px;letter-spacing:0.14px;">gfxh</div>
<div style="top:371.91px;height:7.5px;line-height:7.5px;font-size:5.0px;color:#000;white-space:pre;font-weight:700;left:888.00px;letter-spacing:0.14px;">gfxmode</div>
<div style="left:917.00px;top:116.00px;width:9.00px;height:271.00px;background:#ededed;"></div>
<div style="left:919.90px;top:124.00px;width:0.90px;height:79.50px;background:#4a4a4a;"></div>
<div style="left:893.00px;top:381.00px;width:8.00px;height:0.70px;background:#777;"></div>
<div style="left:884.00px;top:386.80px;width:42.00px;height:0.70px;background:#bbb;"></div>
<div style="left:926.00px;top:60.00px;width:26.00px;height:345.00px;background:#000;"></div>
<div style="left:925.60px;top:70.00px;width:0.50px;height:324.00px;background:#aaa;"></div>
<div style="left:760.00px;top:126.50px;width:122.50px;height:319.00px;background:#f4f4f4;border-radius:0 0 4px 0;"></div>
<div style="left:882.30px;top:126.50px;width:1.20px;height:272.00px;background:#c9c9c9;"></div>
<div style="left:819.50px;top:134.30px;width:5.00px;height:0.70px;background:#bdbdbd;"></div>
<svg style="left:843.50px;top:131.50px;" width="5.5" height="5.5" viewBox="0 0 5.5 5.5"><rect x="0.4" y="0.4" width="4.7" height="4.7" rx="0.8" fill="none" stroke="#b0b0b0" stroke-width="0.8"/></svg>
<svg style="left:867.30px;top:131.80px;" width="5.5" height="5.5" viewBox="0 0 5.5 5.5"><path d="M0 0l5.5 5.5M5.5 0l-5.5 5.5" stroke="#c2c2c2" stroke-width="0.8"/></svg>
<svg style="left:761.50px;top:158.00px;" width="9.5" height="9.5" viewBox="0 0 9.5 9.5"><rect x="0.4" y="0.4" width="8.7" height="8.7" fill="#f8f8f8" stroke="#555" stroke-width="0.8"/><path d="M1 4.7h5.5M4.5 2.4l2.3 2.3l-2.3 2.3" fill="none" stroke="#444" stroke-width="1.1"/></svg>
<div style="top:168.00px;height:9.6px;line-height:9.6px;font-size:6.4px;color:#333;white-space:pre;left:760.00px;">ーン</div>
<svg style="left:789.40px;top:155.50px;" width="13" height="13" viewBox="0 0 13 13"><path d="M2 1l4.5 3.5M1 4l4 1M5 0.5l1 4" stroke="#d6d6d6" stroke-width="0.9" fill="none"/><path d="M5 3.5c3.5-1.5 6.5 1.5 6 5c-1 2.6-4.4 2.8-6 1z" fill="#d2d2d2"/></svg>
<div style="top:169.50px;height:6.6px;line-height:6.6px;font-size:4.4px;color:#cfcfcf;white-space:pre;letter-spacing:-0.031px;left:789.40px;">ｽﾋﾟｰﾄﾞ</div>
<svg style="left:822.20px;top:155.50px;" width="13" height="13" viewBox="0 0 13 13"><path d="M2 1l4.5 3.5M1 4l4 1M5 0.5l1 4" stroke="#d6d6d6" stroke-width="0.9" fill="none"/><path d="M5 3.5c3.5-1.5 6.5 1.5 6 5c-1 2.6-4.4 2.8-6 1z" fill="#d2d2d2"/></svg>
<div style="top:169.50px;height:6.6px;line-height:6.6px;font-size:4.4px;color:#cfcfcf;white-space:pre;letter-spacing:-0.031px;left:822.20px;">ｽﾋﾟｰﾄﾞ</div>
<div style="top:160.10px;height:9.0px;line-height:9.0px;font-size:6px;color:#666;white-space:pre;left:875.30px;">»</div>
<div style="left:752.00px;top:182.90px;width:110.70px;height:10.40px;background:#fff;border:0.6px solid #c4c4c4;"></div>
<svg style="left:854.70px;top:186.80px;" width="4.6" height="2.6" viewBox="0 0 4.6 2.6"><polygon points="0,0 4.6,0 2.3,2.6" fill="#777"/></svg>
<svg style="left:868.00px;top:183.50px;" width="6" height="8.3" viewBox="0 0 6 8.3"><path d="M0 0h6v8.3l-3-2.6l-3 2.6z" fill="#1a80a8"/></svg>
<svg style="left:876.30px;top:191.00px;" width="3" height="2" viewBox="0 0 3 2"><polygon points="0,0 3,0 1.5,2" fill="#888"/></svg>
<div style="left:760.00px;top:195.30px;width:120.00px;height:0.90px;background:#c0c0c0;"></div>
<div style="top:200.30px;height:8.4px;line-height:8.4px;font-size:5.6px;color:#909090;white-space:pre;letter-spacing:-0.618px;left:764.80px;">ワークスペース</div>
<svg style="left:854.60px;top:203.00px;" width="7.5" height="7.5" viewBox="0 0 7.5 7.5"><rect x="0.4" y="0.4" width="6.7" height="6.7" fill="none" stroke="#888" stroke-width="0.7"/><path d="M1.5 2.5h1M3.5 2.5h2.5M1.5 4.8h1M3.5 4.8h2.5" stroke="#888" stroke-width="0.7"/></svg>
<svg style="left:864.50px;top:209.00px;" width="2.6" height="1.8" viewBox="0 0 2.6 1.8"><polygon points="0,0 2.6,0 1.3,1.8" fill="#888"/></svg>
<svg style="left:871.80px;top:203.00px;" width="7" height="7.5" viewBox="0 0 7 7.5"><path d="M0.4 1.2h6v5.8h-4.6M1.4 0.4h5.2" fill="none" stroke="#777" stroke-width="0.8"/></svg>
<div style="left:760.00px;top:216.20px;width:120.00px;height:1.00px;background:#b0b0b0;"></div>
<div style="left:880.00px;top:126.50px;width:0.70px;height:319.00px;background:#c4c4c4;"></div>
<div style="top:217.95px;height:8.7px;line-height:8.7px;font-size:5.8px;color:#8a8a8a;white-space:pre;letter-spacing:0.324px;left:790.00px;">更新日時</div>
<div style="top:217.95px;height:8.7px;line-height:8.7px;font-size:5.8px;color:#9a9a9a;white-space:pre;letter-spacing:-0.073px;left:851.00px;">サイズ</div>
<div style="left:759.00px;top:228.00px;width:123.50px;height:69.50px;background:#fff;"></div>
<div style="left:759.00px;top:297.00px;width:123.50px;height:5.00px;background:#ececec;"></div>
<div style="left:759.00px;top:297.30px;width:53.80px;height:4.40px;background:#cbcbcb;"></div>
<svg style="left:877.50px;top:298.50px;" width="2.5" height="3" viewBox="0 0 2.5 3"><polygon points="0,0 2.5,1.5 0,3" fill="#888"/></svg>
<div style="left:759.00px;top:302.00px;width:123.50px;height:14.00px;background:#eeeeee;"></div>
<div style="left:759.00px;top:315.60px;width:123.50px;height:0.70px;background:#cfcfcf;"></div>
<div style="left:759.00px;top:316.30px;width:123.50px;height:129.20px;background:#eeeeee;border-radius:0 0 4px 0;"></div>
<div style="left:868.50px;top:438.00px;width:0.70px;height:4.00px;background:#999;"></div>
<div style="left:770.00px;top:434.40px;width:85.00px;height:0.60px;background:#dcdcdc;"></div>
<div style="left:13.80px;top:70.50px;width:746.70px;height:388.20px;background:#0a0a0a;border-radius:7px 7px 5px 5px;border:0.6px solid #1c1c1c;"></div>
<svg style="left:22.50px;top:79.00px;" width="8.5" height="9" viewBox="0 0 8.5 9"><rect x="1.5" y="0" width="7" height="9" rx="1" fill="#2fa05a"/><rect x="1.5" y="0" width="7" height="3" fill="#5fd08a"/><rect x="1.5" y="6" width="7" height="3" rx="1" fill="#1b7a42"/><rect x="0" y="2.2" width="5" height="5" rx="0.8" fill="#107c41"/><path d="M1.3 3.4l2.4 2.6M3.7 3.4l-2.4 2.6" stroke="#fff" stroke-width="0.7"/></svg>
<div style="top:78.35px;height:9.3px;line-height:9.3px;font-size:6.2px;color:#f2f2f2;white-space:pre;font-weight:500;letter-spacing:-0.188px;left:40.00px;">自動保存</div>
<div style="left:68.00px;top:78.00px;width:24.50px;height:10.00px;border:0.8px solid #b8b8b8;border-radius:5px;"></div>
<div style="left:69.30px;top:79.20px;width:7.60px;height:7.60px;background:#fff;border-radius:3.8px;"></div>
<div style="top:78.65px;height:8.7px;line-height:8.7px;font-size:5.8px;color:#f2f2f2;white-space:pre;letter-spacing:-0.805px;left:80.50px;">オフ</div>
<svg style="left:99.00px;top:79.00px;" width="9" height="9" viewBox="0 0 9 9"><path d="M0.5 0.5h6.5l1.5 1.5v6.5h-8z M2.3 0.5v2.6h4v-2.6 M2 8.5v-3.3h5v3.3" fill="none" stroke="#f2f2f2" stroke-width="0.8"/></svg>
<svg style="left:115.00px;top:79.00px;" width="9" height="9" viewBox="0 0 9 9"><path d="M1 1v3.5h3.5M1.2 4.3c2-3 6-2 6.3 1c0 2-2 3-4 3.2" fill="none" stroke="#5a5a5a" stroke-width="0.9"/></svg>
<svg style="left:126.50px;top:82.50px;" width="3" height="2" viewBox="0 0 3 2"><path d="M0 0l1.5 1.5l1.5-1.5" fill="none" stroke="#555" stroke-width="0.6"/></svg>
<svg style="left:136.00px;top:79.00px;" width="9" height="9" viewBox="0 0 9 9"><path d="M8 1v3.5h-3.5M7.8 4.3c-2-3-6-2-6.3 1c0 2 2 3 4 3.2" fill="none" stroke="#5a5a5a" stroke-width="0.9"/></svg>
<svg style="left:147.00px;top:82.50px;" width="3" height="2" viewBox="0 0 3 2"><path d="M0 0l1.5 1.5l1.5-1.5" fill="none" stroke="#555" stroke-width="0.6"/></svg>
<svg style="left:156.30px;top:81.00px;" width="4" height="4" viewBox="0 0 4 4"><path d="M0 0.3h4M0.5 1.8l1.5 1.6l1.5-1.6z" stroke="#bbb" fill="#bbb" stroke-width="0.5"/></svg>
<div style="top:78.55px;height:9.3px;line-height:9.3px;font-size:6.2px;color:#f2f2f2;white-space:pre;letter-spacing:-0.010px;left:174.70px;">台本.xlsx • この PC に保存済み</div>
<svg style="left:263.60px;top:82.00px;" width="4.6" height="2.8" viewBox="0 0 4.6 2.8"><path d="M0 0l2.3 2.3l2.3-2.3" fill="none" stroke="#f2f2f2" stroke-width="0.7"/></svg>
<div style="left:296.00px;top:75.00px;width:191.50px;height:16.70px;background:#1b1b1b;border:0.7px solid #484848;border-radius:2px;"></div>
<svg style="left:303.50px;top:79.50px;" width="7" height="7" viewBox="0 0 7 7"><circle cx="4.2" cy="2.8" r="2.3" fill="none" stroke="#bbb" stroke-width="0.7"/><path d="M2.6 4.5l-2.3 2.3" stroke="#bbb" stroke-width="0.7"/></svg>
<div style="top:78.65px;height:9.3px;line-height:9.3px;font-size:6.2px;color:#b0b0b0;white-space:pre;left:317.50px;">検索</div>
<div style="left:666.00px;top:77.00px;width:13.00px;height:13.00px;background:#47378f;border-radius:6.5px;"></div>
<div style="top:80.15px;height:6.9px;line-height:6.9px;font-size:4.6px;color:#d8d0f0;white-space:pre;left:669.43px;">YS</div>
<div style="left:695.00px;top:83.00px;width:6.00px;height:0.80px;background:#f2f2f2;"></div>
<svg style="left:720.30px;top:80.30px;" width="5.5" height="5.5" viewBox="0 0 5.5 5.5"><rect x="0.4" y="0.4" width="4.7" height="4.7" fill="none" stroke="#f2f2f2" stroke-width="0.8"/></svg>
<svg style="left:745.30px;top:80.30px;" width="5.5" height="5.5" viewBox="0 0 5.5 5.5"><path d="M0 0l5.5 5.5M5.5 0l-5.5 5.5" stroke="#f2f2f2" stroke-width="0.9"/></svg>
<div style="top:99.70px;height:9.6px;line-height:9.6px;font-size:6.4px;color:#f2f2f2;white-space:pre;letter-spacing:-1.791px;left:21.00px;">ファイル</div>
<div style="top:99.70px;height:9.6px;line-height:9.6px;font-size:6.4px;color:#f2f2f2;white-space:pre;letter-spacing:-0.761px;left:50.00px;">ホーム</div>
<div style="top:99.70px;height:9.6px;line-height:9.6px;font-size:6.4px;color:#f2f2f2;white-space:pre;letter-spacing:0.009px;left:77.00px;">挿入</div>
<div style="top:99.70px;height:9.6px;line-height:9.6px;font-size:6.4px;color:#f2f2f2;white-space:pre;letter-spacing:0.459px;left:100.60px;">描画</div>
<div style="top:99.70px;height:9.6px;line-height:9.6px;font-size:6.4px;color:#f2f2f2;white-space:pre;letter-spacing:-0.976px;left:125.00px;">ページ レイアウト</div>
<div style="top:99.70px;height:9.6px;line-height:9.6px;font-size:6.4px;color:#f2f2f2;white-space:pre;letter-spacing:0.109px;left:181.00px;">数式</div>
<div style="top:99.70px;height:9.6px;line-height:9.6px;font-size:6.4px;color:#f2f2f2;white-space:pre;letter-spacing:-0.724px;left:205.00px;">データ</div>
<div style="top:99.70px;height:9.6px;line-height:9.6px;font-size:6.4px;color:#f2f2f2;white-space:pre;letter-spacing:0.109px;left:231.00px;">校閲</div>
<div style="top:99.70px;height:9.6px;line-height:9.6px;font-size:6.4px;color:#f2f2f2;white-space:pre;letter-spacing:0.109px;left:254.50px;">表示</div>
<div style="top:99.70px;height:9.6px;line-height:9.6px;font-size:6.4px;color:#f2f2f2;white-space:pre;letter-spacing:0.276px;left:278.00px;">自動化</div>
<div style="top:99.70px;height:9.6px;line-height:9.6px;font-size:6.4px;color:#f2f2f2;white-space:pre;letter-spacing:-0.391px;left:308.00px;">ヘルプ</div>
<div style="left:50.00px;top:109.00px;width:16.70px;height:0.90px;background:#a8d8b8;"></div>
<div style="left:682.00px;top:97.80px;width:35.00px;height:12.30px;background:#2b2b2b;border:0.7px solid #555;border-radius:2px;"></div>
<svg style="left:686.00px;top:101.00px;" width="6" height="6" viewBox="0 0 6 6"><path d="M0.4 0.4h5.2v3.6h-3l-1.2 1.3v-1.3h-1z" fill="none" stroke="#f2f2f2" stroke-width="0.7"/></svg>
<div style="top:99.65px;height:8.7px;line-height:8.7px;font-size:5.8px;color:#f2f2f2;white-space:pre;letter-spacing:-0.801px;left:694.00px;">コメント</div>
<div style="left:720.50px;top:97.80px;width:34.00px;height:12.30px;background:#3aa55d;border-radius:2px;"></div>
<svg style="left:724.50px;top:100.50px;" width="6" height="6.5" viewBox="0 0 6 6.5"><path d="M0.4 2.6v3.5h5v-3.5M3 0.4v3.6M1.6 1.6l1.4-1.3l1.4 1.3" fill="none" stroke="#0a3a1a" stroke-width="0.7"/></svg>
<div style="top:99.50px;height:9.0px;line-height:9.0px;font-size:6px;color:#0a3018;white-space:pre;letter-spacing:-0.008px;left:733.00px;">共有</div>
<svg style="left:747.50px;top:103.00px;" width="3.6" height="2.2" viewBox="0 0 3.6 2.2"><path d="M0 0l1.8 1.8l1.8-1.8" fill="none" stroke="#0a3018" stroke-width="0.7"/></svg>
<div style="left:19.00px;top:112.60px;width:737.00px;height:51.20px;background:#212121;border-radius:4px;"></div>
<div style="left:80.00px;top:117.00px;width:0.70px;height:42.00px;background:#3a3a3a;"></div>
<div style="left:227.50px;top:117.00px;width:0.70px;height:42.00px;background:#3a3a3a;"></div>
<div style="left:333.80px;top:117.00px;width:0.70px;height:42.00px;background:#3a3a3a;"></div>
<div style="left:418.00px;top:117.00px;width:0.70px;height:42.00px;background:#3a3a3a;"></div>
<div style="left:519.00px;top:117.00px;width:0.70px;height:42.00px;background:#3a3a3a;"></div>
<div style="left:570.00px;top:117.00px;width:0.70px;height:42.00px;background:#3a3a3a;"></div>
<div style="left:659.00px;top:117.00px;width:0.70px;height:42.00px;background:#3a3a3a;"></div>
<div style="left:690.00px;top:117.00px;width:0.70px;height:42.00px;background:#3a3a3a;"></div>
<div style="left:721.00px;top:117.00px;width:0.70px;height:42.00px;background:#3a3a3a;"></div>
<svg style="left:30.60px;top:116.20px;" width="15" height="15" viewBox="0 0 15 15"><path d="M0.7 2.4h9.6v11.2h-9.6z" fill="none" stroke="#e8a33a" stroke-width="1.2"/><path d="M3.3 2.4v-1.1h1a1.2 1.2 0 0 1 2.2 0h1v1.1z" fill="#212121" stroke="#ccc" stroke-width="0.7"/><rect x="7.4" y="6" width="7" height="8.6" fill="#1e2a3a" stroke="#d8d8d8" stroke-width="0.8"/></svg>
<div style="top:134.10px;height:9.0px;line-height:9.0px;font-size:6px;color:#f2f2f2;white-space:pre;letter-spacing:-0.604px;left:25.60px;">貼り付け</div>
<svg style="left:35.60px;top:145.00px;" width="3.2" height="2.0" viewBox="0 0 3.2 2.0"><path d="M0 0l1.6 1.6l1.6 -1.6" fill="none" stroke="#ccc" stroke-width="0.7"/></svg>
<svg style="left:53.10px;top:116.20px;" width="7" height="8" viewBox="0 0 7 8"><path d="M2 0l3 5.2M5 0l-3 5.2" stroke="#ccc" stroke-width="0.7"/><circle cx="1.7" cy="6.3" r="1.2" fill="none" stroke="#5b9bd5" stroke-width="0.8"/><circle cx="5.3" cy="6.3" r="1.2" fill="none" stroke="#5b9bd5" stroke-width="0.8"/></svg>
<svg style="left:52.20px;top:129.00px;" width="10" height="9" viewBox="0 0 10 9"><rect x="0.4" y="0.4" width="5.6" height="6.4" rx="0.6" fill="none" stroke="#ddd" stroke-width="0.8"/><rect x="3" y="2.2" width="5.8" height="6.4" rx="0.6" fill="#212121" stroke="#ddd" stroke-width="0.8"/></svg>
<svg style="left:67.30px;top:133.00px;" width="3.4" height="2.2" viewBox="0 0 3.4 2.2"><polygon points="0,0 3.4,0 1.7,2" fill="#ccc"/></svg>
<svg style="left:52.20px;top:142.50px;" width="10" height="9" viewBox="0 0 10 9"><path d="M6.5 0.6l2.6 1.6l-1.2 2l-2.6-1.6z" fill="none" stroke="#ccc" stroke-width="0.7"/><path d="M0.8 5.2l4.6-2l2.2 1.6l-3.4 3.4z" fill="#e6d04a"/></svg>
<div style="top:154.45px;height:8.7px;line-height:8.7px;font-size:5.8px;color:#e0e0e0;white-space:pre;letter-spacing:-1.456px;left:30.60px;">クリップボード</div>
<svg style="left:73.20px;top:157.00px;" width="4.5" height="4.5" viewBox="0 0 4.5 4.5"><path d="M0 4v-4h4M1.6 1.6l2.6 2.6M4.2 2.4v1.8h-1.8" fill="none" stroke="#bbb" stroke-width="0.6"/></svg>
<div style="left:83.80px;top:119.50px;width:88.20px;height:10.00px;background:#1b1b1b;border:0.6px solid #393939;border-radius:1.5px;"></div>
<div style="top:120.15px;height:8.7px;line-height:8.7px;font-size:5.8px;color:#f2f2f2;white-space:pre;letter-spacing:-0.800px;left:87.00px;">游ゴシック</div>
<svg style="left:165.90px;top:123.70px;" width="3.2" height="2.0" viewBox="0 0 3.2 2.0"><path d="M0 0l1.6 1.6l1.6 -1.6" fill="none" stroke="#ccc" stroke-width="0.7"/></svg>
<div style="left:175.00px;top:119.50px;width:20.00px;height:10.00px;background:#1b1b1b;border:0.6px solid #393939;border-radius:1.5px;"></div>
<div style="top:120.25px;height:8.7px;line-height:8.7px;font-size:5.8px;color:#f2f2f2;white-space:pre;left:177.50px;">11</div>
<svg style="left:188.90px;top:123.70px;" width="3.2" height="2.0" viewBox="0 0 3.2 2.0"><path d="M0 0l1.6 1.6l1.6 -1.6" fill="none" stroke="#ccc" stroke-width="0.7"/></svg>
<div style="top:118.30px;height:12.0px;line-height:12.0px;font-size:8px;color:#f2f2f2;white-space:pre;left:199.33px;">A</div>
<div style="top:117.62px;height:6.75px;line-height:6.75px;font-size:4.5px;color:#f2f2f2;white-space:pre;left:205.24px;">^</div>
<div style="top:119.70px;height:10.2px;line-height:10.2px;font-size:6.8px;color:#f2f2f2;white-space:pre;left:213.23px;">A</div>
<div style="top:118.12px;height:6.75px;line-height:6.75px;font-size:4.5px;color:#f2f2f2;white-space:pre;left:218.75px;">ˇ</div>
<div style="top:135.05px;height:9.9px;line-height:9.9px;font-size:6.6px;color:#f2f2f2;white-space:pre;font-weight:700;left:87.62px;">B</div>
<div style="top:135.05px;height:9.9px;line-height:9.9px;font-size:6.6px;color:#f2f2f2;white-space:pre;font-family:'Liberation Serif',serif;left:103.40px;font-style:italic;">I</div>
<div style="top:135.00px;height:9.6px;line-height:9.6px;font-size:6.4px;color:#f2f2f2;white-space:pre;left:115.19px;text-decoration:underline;">U</div>
<svg style="left:125.40px;top:139.40px;" width="3.2" height="2.0" viewBox="0 0 3.2 2.0"><path d="M0 0l1.6 1.6l1.6 -1.6" fill="none" stroke="#ccc" stroke-width="0.7"/></svg>
<svg style="left:135.00px;top:135.50px;" width="10" height="9" viewBox="0 0 10 9"><rect x="0.5" y="0.5" width="9" height="8" fill="none" stroke="#999" stroke-width="0.6" stroke-dasharray="1 0.8"/><path d="M0.5 4.5h9M5 0.5v8" stroke="#999" stroke-width="0.5" stroke-dasharray="1 0.8"/><path d="M0.3 8.6h9.4" stroke="#e8e8e8" stroke-width="0.9"/></svg>
<svg style="left:148.40px;top:139.40px;" width="3.2" height="2.0" viewBox="0 0 3.2 2.0"><path d="M0 0l1.6 1.6l1.6 -1.6" fill="none" stroke="#ccc" stroke-width="0.7"/></svg>
<svg style="left:158.50px;top:134.00px;" width="10" height="8" viewBox="0 0 10 8"><path d="M2.5 5.5l3-4.2l3 2.3l-2.6 3.2z" fill="none" stroke="#ddd" stroke-width="0.7"/><path d="M5 0.6l1.2 1" stroke="#ddd" stroke-width="0.7"/></svg>
<div style="left:158.30px;top:142.60px;width:10.60px;height:2.30px;background:#ffe83a;"></div>
<svg style="left:172.20px;top:139.40px;" width="3.2" height="2.0" viewBox="0 0 3.2 2.0"><path d="M0 0l1.6 1.6l1.6 -1.6" fill="none" stroke="#ccc" stroke-width="0.7"/></svg>
<div style="top:132.90px;height:10.8px;line-height:10.8px;font-size:7.2px;color:#f2f2f2;white-space:pre;left:182.60px;">A</div>
<div style="left:179.80px;top:142.60px;width:10.60px;height:2.30px;background:#e0262c;"></div>
<svg style="left:193.40px;top:139.40px;" width="3.2" height="2.0" viewBox="0 0 3.2 2.0"><path d="M0 0l1.6 1.6l1.6 -1.6" fill="none" stroke="#ccc" stroke-width="0.7"/></svg>
<div style="left:201.00px;top:133.00px;width:0.60px;height:14.00px;background:#444;"></div>
<svg style="left:205.50px;top:134.50px;" width="6.5" height="11" viewBox="0 0 6.5 11"><path d="M1 2.2h4.5M3.2 0.6v3M1.6 4.6l3.4 0" stroke="#aaa" stroke-width="0.6"/><text x="3.2" y="10.4" font-size="5.4" font-family="Liberation Sans,sans-serif" fill="#ddd" text-anchor="middle">亜</text></svg>
<svg style="left:215.90px;top:139.40px;" width="3.2" height="2.0" viewBox="0 0 3.2 2.0"><path d="M0 0l1.6 1.6l1.6 -1.6" fill="none" stroke="#ccc" stroke-width="0.7"/></svg>
<div style="top:154.15px;height:8.7px;line-height:8.7px;font-size:5.8px;color:#e0e0e0;white-space:pre;letter-spacing:-1.426px;left:140.00px;">フォント</div>
<svg style="left:220.30px;top:156.50px;" width="4.5" height="4.5" viewBox="0 0 4.5 4.5"><path d="M0 4v-4h4M1.6 1.6l2.6 2.6M4.2 2.4v1.8h-1.8" fill="none" stroke="#bbb" stroke-width="0.6"/></svg>
<svg style="left:233.00px;top:120.05px;" width="8" height="6.300000000000001" viewBox="0 0 8 6.300000000000001"><rect x="0" y="0.0" width="8" height="0.8" fill="#ddd"/><rect x="0" y="2.1" width="8" height="0.8" fill="#ddd"/><rect x="0" y="4.2" width="5" height="0.8" fill="#ddd"/></svg>
<div style="left:244.30px;top:117.70px;width:13.00px;height:12.60px;background:#383838;border:0.6px solid #707070;border-radius:1.5px;"></div>
<svg style="left:246.55px;top:120.50px;" width="8.5" height="8.4" viewBox="0 0 8.5 8.4"><rect x="0" y="0.0" width="8.5" height="0.8" fill="#ddd"/><rect x="0" y="2.1" width="8.5" height="0.8" fill="#ddd"/><rect x="0" y="4.2" width="8.5" height="0.8" fill="#ddd"/><rect x="0" y="6.300000000000001" width="8.5" height="0.8" fill="#ddd"/></svg>
<svg style="left:260.50px;top:122.05px;" width="8" height="6.300000000000001" viewBox="0 0 8 6.300000000000001"><rect x="0" y="0.0" width="5" height="0.8" fill="#ddd"/><rect x="0" y="2.1" width="8" height="0.8" fill="#ddd"/><rect x="0" y="4.2" width="8" height="0.8" fill="#ddd"/></svg>
<svg style="left:273.00px;top:119.50px;" width="10" height="10" viewBox="0 0 10 10"><text x="0.5" y="7.5" font-size="6" font-family="Liberation Sans,sans-serif" fill="#ddd" transform="rotate(-35 4 6)">ab</text><path d="M3.5 9.2l5.2-4.6M8.7 4.6l-2 0.2M8.7 4.6l-0.3 2" stroke="#5b9bd5" stroke-width="0.8" fill="none"/></svg>
<svg style="left:284.90px;top:123.80px;" width="3.2" height="2.0" viewBox="0 0 3.2 2.0"><path d="M0 0l1.6 1.6l1.6 -1.6" fill="none" stroke="#ccc" stroke-width="0.7"/></svg>
<svg style="left:306.50px;top:119.50px;" width="9" height="10" viewBox="0 0 9 10"><text x="0" y="4.2" font-size="4.4" font-family="Liberation Sans,sans-serif" fill="#ccc">ab</text><path d="M0 6h7a1.2 1.2 0 0 1 0 2.6h-3M5.2 7.4l-1.4 1.2l1.4 1.2" fill="none" stroke="#5b9bd5" stroke-width="0.8"/></svg>
<svg style="left:232.45px;top:136.60px;" width="8.5" height="8.4" viewBox="0 0 8.5 8.4"><rect x="0" y="0.0" width="8.5" height="0.8" fill="#ddd"/><rect x="0" y="2.1" width="6" height="0.8" fill="#ddd"/><rect x="0" y="4.2" width="8.5" height="0.8" fill="#ddd"/><rect x="0" y="6.300000000000001" width="6" height="0.8" fill="#ddd"/></svg>
<svg style="left:246.35px;top:136.60px;" width="8.5" height="8.4" viewBox="0 0 8.5 8.4"><rect x="0.0" y="0.0" width="8.5" height="0.8" fill="#ddd"/><rect x="1.25" y="2.1" width="6" height="0.8" fill="#ddd"/><rect x="0.0" y="4.2" width="8.5" height="0.8" fill="#ddd"/><rect x="1.25" y="6.300000000000001" width="6" height="0.8" fill="#ddd"/></svg>
<svg style="left:260.25px;top:136.60px;" width="8.5" height="8.4" viewBox="0 0 8.5 8.4"><rect x="0.0" y="0.0" width="8.5" height="0.8" fill="#ddd"/><rect x="2.5" y="2.1" width="6" height="0.8" fill="#ddd"/><rect x="0.0" y="4.2" width="8.5" height="0.8" fill="#ddd"/><rect x="2.5" y="6.300000000000001" width="6" height="0.8" fill="#ddd"/></svg>
<svg style="left:273.80px;top:136.40px;" width="9" height="8" viewBox="0 0 9 8"><path d="M4 0.4h5.5M4 2.9h5.5M4 5.4h5.5M0 7.9h9.5" stroke="#ddd" stroke-width="0.8"/><path d="M2.6 1.4l-2 1.6l2 1.6" fill="none" stroke="#5b9bd5" stroke-width="0.8"/></svg>
<svg style="left:287.30px;top:136.40px;" width="9" height="8" viewBox="0 0 9 8"><path d="M4 0.4h5.5M4 2.9h5.5M4 5.4h5.5M0 7.9h9.5" stroke="#ddd" stroke-width="0.8"/><path d="M0.4 1.4l2 1.6l-2 1.6" fill="none" stroke="#5b9bd5" stroke-width="0.8"/></svg>
<div style="left:301.50px;top:117.70px;width:0.60px;height:31.00px;background:#444;"></div>
<svg style="left:305.50px;top:135.50px;" width="10.5" height="9" viewBox="0 0 10.5 9"><rect x="0.4" y="0.4" width="9.7" height="8.2" fill="none" stroke="#ccc" stroke-width="0.7"/><rect x="0.4" y="2.7" width="9.7" height="3.6" fill="#3a6fb0" stroke="#7ab0e8" stroke-width="0.6"/><path d="M2.6 4.5h5.2M3.6 3.6l-1 0.9l1 0.9M6.8 3.6l1 0.9l-1 0.9" fill="none" stroke="#fff" stroke-width="0.5"/></svg>
<svg style="left:321.40px;top:139.40px;" width="3.2" height="2.0" viewBox="0 0 3.2 2.0"><path d="M0 0l1.6 1.6l1.6 -1.6" fill="none" stroke="#ccc" stroke-width="0.7"/></svg>
<div style="top:154.15px;height:8.7px;line-height:8.7px;font-size:5.8px;color:#e0e0e0;white-space:pre;letter-spacing:0.695px;left:269.50px;">配置</div>
<svg style="left:327.50px;top:156.50px;" width="4.5" height="4.5" viewBox="0 0 4.5 4.5"><path d="M0 4v-4h4M1.6 1.6l2.6 2.6M4.2 2.4v1.8h-1.8" fill="none" stroke="#bbb" stroke-width="0.6"/></svg>
<div style="left:338.80px;top:119.50px;width:75.00px;height:10.00px;background:#1b1b1b;border:0.6px solid #393939;border-radius:1.5px;"></div>
<div style="top:120.25px;height:8.7px;line-height:8.7px;font-size:5.8px;color:#f2f2f2;white-space:pre;letter-spacing:0.195px;left:341.50px;">標準</div>
<svg style="left:408.40px;top:123.80px;" width="3.2" height="2.0" viewBox="0 0 3.2 2.0"><path d="M0 0l1.6 1.6l1.6 -1.6" fill="none" stroke="#ccc" stroke-width="0.7"/></svg>
<svg style="left:339.50px;top:136.00px;" width="10" height="8" viewBox="0 0 10 8"><rect x="0.4" y="0.4" width="9.2" height="6.4" rx="0.6" fill="none" stroke="#ddd" stroke-width="0.8"/><circle cx="5" cy="3.6" r="1.6" fill="#e6c84a"/><rect x="1" y="5.8" width="8" height="1.6" fill="#e6d68a"/></svg>
<svg style="left:352.40px;top:139.40px;" width="3.2" height="2.0" viewBox="0 0 3.2 2.0"><path d="M0 0l1.6 1.6l1.6 -1.6" fill="none" stroke="#ccc" stroke-width="0.7"/></svg>
<div style="top:134.45px;height:11.1px;line-height:11.1px;font-size:7.4px;color:#f2f2f2;white-space:pre;left:362.71px;">%</div>
<div style="top:131.00px;height:15.0px;line-height:15.0px;font-size:10px;color:#f2f2f2;white-space:pre;font-weight:700;left:378.61px;">,</div>
<div style="left:388.80px;top:133.00px;width:0.60px;height:14.00px;background:#444;"></div>
<svg style="left:391.50px;top:135.50px;" width="9.5" height="9" viewBox="0 0 9.5 9"><path d="M3 2.2h-2.4M0.6 2.2l1.2-1M0.6 2.2l1.2 1" stroke="#5b9bd5" stroke-width="0.7" fill="none"/><text x="4" y="3.6" font-size="3.6" font-family="Liberation Sans,sans-serif" fill="#ddd">0</text><text x="2.4" y="8.6" font-size="3.6" font-family="Liberation Sans,sans-serif" fill="#ddd">.00</text></svg>
<svg style="left:405.00px;top:135.50px;" width="9.5" height="9" viewBox="0 0 9.5 9"><text x="1.4" y="3.6" font-size="3.6" font-family="Liberation Sans,sans-serif" fill="#ddd">.00</text><path d="M1 6.8h2.6M3.6 6.8l-1.2-1M3.6 6.8l-1.2 1" stroke="#3fb07a" stroke-width="0.7" fill="none"/><text x="5" y="8.6" font-size="3.6" font-family="Liberation Sans,sans-serif" fill="#ddd">.0</text></svg>
<div style="top:154.15px;height:8.7px;line-height:8.7px;font-size:5.8px;color:#e0e0e0;white-space:pre;letter-spacing:0.545px;left:366.00px;">数値</div>
<svg style="left:412.00px;top:156.50px;" width="4.5" height="4.5" viewBox="0 0 4.5 4.5"><path d="M0 4v-4h4M1.6 1.6l2.6 2.6M4.2 2.4v1.8h-1.8" fill="none" stroke="#bbb" stroke-width="0.6"/></svg>
<svg style="left:428.70px;top:117.70px;" width="15.2" height="12" viewBox="0 0 15.2 12"><rect x="0.3" y="0.3" width="14.6" height="11.4" fill="#212121" stroke="#cfcfcf" stroke-width="0.6"/><rect x="0.6" y="0.6" width="9.4" height="3.6" fill="#e03a3a"/><rect x="0.6" y="4.2" width="9.4" height="3.6" fill="#3a74cc"/><rect x="0.6" y="7.8" width="9.4" height="3.6" fill="#e03a3a"/><path d="M5 0.3v11.4M10 0.3v11.4M0.3 4.1h14.6M0.3 7.9h14.6" stroke="#e4e4e4" stroke-width="0.6"/></svg>
<div style="top:132.57px;height:8.85px;line-height:8.85px;font-size:5.9px;color:#f2f2f2;white-space:pre;letter-spacing:-0.016px;left:424.55px;">条件付き</div>
<div style="top:140.88px;height:8.85px;line-height:8.85px;font-size:5.9px;color:#f2f2f2;white-space:pre;letter-spacing:0.109px;left:427.80px;">書式</div>
<svg style="left:442.40px;top:144.70px;" width="3.2" height="2.0" viewBox="0 0 3.2 2.0"><path d="M0 0l1.6 1.6l1.6 -1.6" fill="none" stroke="#ccc" stroke-width="0.7"/></svg>
<svg style="left:460.90px;top:117.70px;" width="15.8" height="15.2" viewBox="0 0 15.8 15.2"><path d="M0.3 0.3h14.6v9c-2 3.4-12 3.4-14.6 0z" fill="#212121" stroke="#cfcfcf" stroke-width="0.6"/><path d="M0.6 4.2h9.6v7.2c-3 1-7 0.6-9.6-2z" fill="#2a78d8"/><path d="M5 0.3v9M10 0.3v9M0.3 4.1h14.6M0.3 7.9h10" stroke="#cfcfcf" stroke-width="0.55"/><path d="M13.2 3.2l1.8 1.6l-7 8.4l-2.6 1.2l0.8-2.8z" fill="#2a78d8" stroke="#e8f2ff" stroke-width="0.7"/></svg>
<div style="top:132.57px;height:8.85px;line-height:8.85px;font-size:5.9px;color:#f2f2f2;white-space:pre;letter-spacing:-1.203px;left:452.05px;">テーブルとして</div>
<div style="top:140.88px;height:8.85px;line-height:8.85px;font-size:5.9px;color:#f2f2f2;white-space:pre;letter-spacing:0.109px;left:452.80px;">書式設定</div>
<svg style="left:479.90px;top:144.70px;" width="3.2" height="2.0" viewBox="0 0 3.2 2.0"><path d="M0 0l1.6 1.6l1.6 -1.6" fill="none" stroke="#ccc" stroke-width="0.7"/></svg>
<svg style="left:494.30px;top:117.70px;" width="15.4" height="15.2" viewBox="0 0 15.4 15.2"><path d="M0.3 0.3h14.6v8.6c-2.4 3.6-12 3.6-14.6 0z" fill="#2a78d8" stroke="#cfcfcf" stroke-width="0.6"/><path d="M0.3 3.6h14.6" stroke="#9cc4f0" stroke-width="0.5"/><path d="M13 3.4l1.8 1.6l-6.4 8l-2.6 1.2l0.8-2.8z" fill="#2a78d8" stroke="#e8f2ff" stroke-width="0.7"/></svg>
<div style="top:132.57px;height:8.85px;line-height:8.85px;font-size:5.9px;color:#f2f2f2;white-space:pre;letter-spacing:-0.557px;left:493.00px;">セルの</div>
<div style="top:140.88px;height:8.85px;line-height:8.85px;font-size:5.9px;color:#f2f2f2;white-space:pre;letter-spacing:-1.091px;left:488.60px;">スタイル</div>
<svg style="left:509.40px;top:144.70px;" width="3.2" height="2.0" viewBox="0 0 3.2 2.0"><path d="M0 0l1.6 1.6l1.6 -1.6" fill="none" stroke="#ccc" stroke-width="0.7"/></svg>
<div style="top:154.15px;height:8.7px;line-height:8.7px;font-size:5.8px;color:#e0e0e0;white-space:pre;letter-spacing:-0.926px;left:460.00px;">スタイル</div>
<svg style="left:525.50px;top:116.60px;" width="8.5" height="7.5" viewBox="0 0 8.5 7.5"><rect x="0.4" y="0.4" width="7.7" height="6.7" fill="none" stroke="#ccc" stroke-width="0.7"/><path d="M0.4 2.6h7.7M0.4 4.9h7.7M3 0.4v6.7" stroke="#aaa" stroke-width="0.5"/><rect x="3.2" y="2.6" width="4.6" height="2.3" fill="#3a8ad8"/></svg>
<div style="top:115.80px;height:9.0px;line-height:9.0px;font-size:6px;color:#f2f2f2;white-space:pre;letter-spacing:0.492px;left:536.00px;">挿入</div>
<svg style="left:557.40px;top:119.80px;" width="3.2" height="2.0" viewBox="0 0 3.2 2.0"><path d="M0 0l1.6 1.6l1.6 -1.6" fill="none" stroke="#ccc" stroke-width="0.7"/></svg>
<svg style="left:525.50px;top:130.30px;" width="8.5" height="7.5" viewBox="0 0 8.5 7.5"><rect x="0.4" y="0.4" width="7.7" height="6.7" fill="none" stroke="#ccc" stroke-width="0.7"/><path d="M0.4 2.6h7.7M0.4 4.9h7.7M3 0.4v6.7" stroke="#aaa" stroke-width="0.5"/><rect x="3.2" y="2.6" width="4.6" height="2.3" fill="#d8453a"/></svg>
<div style="top:129.50px;height:9.0px;line-height:9.0px;font-size:6px;color:#f2f2f2;white-space:pre;letter-spacing:0.492px;left:536.00px;">削除</div>
<svg style="left:557.40px;top:133.50px;" width="3.2" height="2.0" viewBox="0 0 3.2 2.0"><path d="M0 0l1.6 1.6l1.6 -1.6" fill="none" stroke="#ccc" stroke-width="0.7"/></svg>
<svg style="left:525.50px;top:143.60px;" width="8.5" height="7.5" viewBox="0 0 8.5 7.5"><rect x="0.4" y="0.4" width="7.7" height="6.7" fill="none" stroke="#ccc" stroke-width="0.7"/><path d="M0.4 2.6h7.7M0.4 4.9h7.7M3 0.4v6.7" stroke="#aaa" stroke-width="0.5"/><rect x="3.2" y="2.6" width="4.6" height="2.3" fill="#3a8ad8"/></svg>
<div style="top:142.80px;height:9.0px;line-height:9.0px;font-size:6px;color:#f2f2f2;white-space:pre;letter-spacing:0.492px;left:536.00px;">書式</div>
<svg style="left:550.90px;top:146.80px;" width="3.2" height="2.0" viewBox="0 0 3.2 2.0"><path d="M0 0l1.6 1.6l1.6 -1.6" fill="none" stroke="#ccc" stroke-width="0.7"/></svg>
<div style="top:154.15px;height:8.7px;line-height:8.7px;font-size:5.8px;color:#e0e0e0;white-space:pre;letter-spacing:-0.305px;left:539.00px;">セル</div>
<div style="top:113.15px;height:14.1px;line-height:14.1px;font-size:9.4px;color:#f2f2f2;white-space:pre;left:577.50px;">Σ</div>
<svg style="left:591.40px;top:119.70px;" width="3.2" height="2.0" viewBox="0 0 3.2 2.0"><path d="M0 0l1.6 1.6l1.6 -1.6" fill="none" stroke="#ccc" stroke-width="0.7"/></svg>
<svg style="left:575.50px;top:130.30px;" width="9" height="7.5" viewBox="0 0 9 7.5"><rect x="0.4" y="0.4" width="8.2" height="6.7" fill="none" stroke="#ccc" stroke-width="0.7"/><path d="M4.5 1.2v4.2M2.8 3.8l1.7 1.8l1.7-1.8" fill="none" stroke="#5b9bd5" stroke-width="0.9"/></svg>
<svg style="left:588.40px;top:133.50px;" width="3.2" height="2.0" viewBox="0 0 3.2 2.0"><path d="M0 0l1.6 1.6l1.6 -1.6" fill="none" stroke="#ccc" stroke-width="0.7"/></svg>
<svg style="left:575.50px;top:143.30px;" width="9" height="8" viewBox="0 0 9 8"><path d="M3.4 7.2l-2.8-2.4l4.6-4.2l3.2 2.8l-3.8 3.8z" fill="#b060c8" stroke="#d8a8e8" stroke-width="0.5"/></svg>
<svg style="left:588.40px;top:146.80px;" width="3.2" height="2.0" viewBox="0 0 3.2 2.0"><path d="M0 0l1.6 1.6l1.6 -1.6" fill="none" stroke="#ccc" stroke-width="0.7"/></svg>
<svg style="left:607.50px;top:116.50px;" width="17" height="15" viewBox="0 0 17 15"><text x="0" y="5.8" font-size="5.6" font-family="Liberation Sans,sans-serif" fill="#5b9bd5">A</text><text x="0" y="12.4" font-size="5.6" font-family="Liberation Sans,sans-serif" fill="#ddd">Z</text><path d="M6.6 1.6h10l-4 4.6v5.6l-2 1.2v-6.8z" fill="none" stroke="#ddd" stroke-width="0.8"/></svg>
<div style="top:132.57px;height:8.85px;line-height:8.85px;font-size:5.9px;color:#f2f2f2;white-space:pre;letter-spacing:-0.391px;left:602.55px;">並べ替えと</div>
<div style="top:140.88px;height:8.85px;line-height:8.85px;font-size:5.9px;color:#f2f2f2;white-space:pre;letter-spacing:-1.469px;left:602.50px;">フィルター</div>
<svg style="left:628.90px;top:144.70px;" width="3.2" height="2.0" viewBox="0 0 3.2 2.0"><path d="M0 0l1.6 1.6l1.6 -1.6" fill="none" stroke="#ccc" stroke-width="0.7"/></svg>
<svg style="left:637.00px;top:115.50px;" width="16" height="16" viewBox="0 0 16 16"><circle cx="10" cy="5.7" r="5.2" fill="none" stroke="#ddd" stroke-width="0.9"/><path d="M6.6 9l-5.6 6" stroke="#ddd" stroke-width="1"/></svg>
<div style="top:132.57px;height:8.85px;line-height:8.85px;font-size:5.9px;color:#f2f2f2;white-space:pre;letter-spacing:0.276px;left:635.15px;">検索と</div>
<div style="top:140.88px;height:8.85px;line-height:8.85px;font-size:5.9px;color:#f2f2f2;white-space:pre;letter-spacing:0.109px;left:635.60px;">選択</div>
<svg style="left:650.10px;top:144.70px;" width="3.2" height="2.0" viewBox="0 0 3.2 2.0"><path d="M0 0l1.6 1.6l1.6 -1.6" fill="none" stroke="#ccc" stroke-width="0.7"/></svg>
<div style="top:154.15px;height:8.7px;line-height:8.7px;font-size:5.8px;color:#e0e0e0;white-space:pre;letter-spacing:0.345px;left:608.80px;">編集</div>
<svg style="left:666.80px;top:115.20px;" width="17.6" height="15.6" viewBox="0 0 17.6 15.6"><rect x="0.5" y="0.5" width="17" height="15.5" fill="#3a1a14" stroke="#c8482a" stroke-width="0.8"/><path d="M9 0.5v15.5M0.5 8.2h17" stroke="#c8482a" stroke-width="0.8"/><rect x="2.4" y="2.4" width="4.6" height="3.8" fill="none" stroke="#a83c20" stroke-width="0.6"/><rect x="11" y="10.2" width="4.6" height="3.8" fill="none" stroke="#a83c20" stroke-width="0.6"/></svg>
<div style="top:132.57px;height:8.85px;line-height:8.85px;font-size:5.9px;color:#f2f2f2;white-space:pre;letter-spacing:-0.891px;left:670.00px;">アド</div>
<div style="top:140.88px;height:8.85px;line-height:8.85px;font-size:5.9px;color:#f2f2f2;white-space:pre;letter-spacing:-1.141px;left:670.25px;">イン</div>
<div style="top:154.15px;height:8.7px;line-height:8.7px;font-size:5.8px;color:#e0e0e0;white-space:pre;letter-spacing:-1.301px;left:666.00px;">アドイン</div>
<svg style="left:697.20px;top:115.20px;" width="18" height="16.4" viewBox="0 0 18 16.4"><defs><clipPath id="cpc"><path d="M5.2 0.6h5c1.6 0 2.4 0.8 2.9 2.2l0.5 1.6h1.6c2 0 3 1.6 2.4 3.4l-1.4 4.6c-0.6 2-1.8 3.2-3.8 3.2h-5.2c-1.4 0-2.4-0.8-2.8-2l-0.5-1.8h-1.5c-2 0-2.8-1.6-2.2-3.4l1.4-4.6c0.6-2 1.6-3.2 3.6-3.2z"/></clipPath><filter id="cpb" x="-0.3" y="-0.3" width="1.6" height="1.6"><feGaussianBlur stdDeviation="1.6"/></filter></defs><g clip-path="url(#cpc)"><rect width="18" height="16.4" fill="#c8a0e8"/><g filter="url(#cpb)"><circle cx="4" cy="3.5" r="5" fill="#2f86f0"/><circle cx="3.5" cy="11" r="4.4" fill="#48d070"/><circle cx="7.5" cy="14.5" r="3.4" fill="#f0d840"/><circle cx="13.5" cy="3.5" r="4.6" fill="#b858e8"/><circle cx="15" cy="9.5" r="4" fill="#f05a8a"/><circle cx="12" cy="13.5" r="3.6" fill="#f08a3a"/><circle cx="9" cy="8" r="2.2" fill="#f4f0ff"/></g></g></svg>
<div style="top:132.32px;height:9.75px;line-height:9.75px;font-size:6.5px;color:#f2f2f2;white-space:pre;letter-spacing:0.109px;left:695.10px;">Copilot</div>
<svg style="left:746.70px;top:156.25px;" width="4.2" height="2.5" viewBox="0 0 4.2 2.5"><path d="M0 0l2.1 2.1l2.1 -2.1" fill="none" stroke="#ddd" stroke-width="0.7"/></svg>
<div style="left:18.60px;top:168.60px;width:52.60px;height:15.40px;background:#272727;border:0.6px solid #3a3a3a;border-radius:3px;"></div>
<div style="top:171.05px;height:11.1px;line-height:11.1px;font-size:7.4px;color:#f2f2f2;white-space:pre;left:22.40px;">A2</div>
<svg style="left:64.60px;top:175.85px;" width="3.8" height="2.3" viewBox="0 0 3.8 2.3"><path d="M0 0l1.9 1.9l1.9 -1.9" fill="none" stroke="#ddd" stroke-width="0.7"/></svg>
<div style="left:77.00px;top:174.40px;width:0.80px;height:0.80px;background:#999;"></div>
<div style="left:77.00px;top:176.40px;width:0.80px;height:0.80px;background:#999;"></div>
<div style="left:77.00px;top:178.40px;width:0.80px;height:0.80px;background:#999;"></div>
<div style="left:82.30px;top:168.60px;width:45.30px;height:15.40px;background:#272727;border:0.6px solid #3a3a3a;border-radius:3px;"></div>
<svg style="left:87.50px;top:173.80px;" width="5.6" height="5.6" viewBox="0 0 5.6 5.6"><path d="M0 0l5.6 5.6M5.6 0l-5.6 5.6" stroke="#4a4a4a" stroke-width="0.8"/></svg>
<svg style="left:98.00px;top:173.80px;" width="7" height="5.6" viewBox="0 0 7 5.6"><path d="M0.3 3l2.2 2.3l4-5" fill="none" stroke="#4a4a4a" stroke-width="0.8"/></svg>
<div style="top:169.75px;height:12.9px;line-height:12.9px;font-size:8.6px;color:#f2f2f2;white-space:pre;font-family:'Liberation Serif',serif;left:111.10px;font-style:italic;">fx</div>
<svg style="left:122.80px;top:175.95px;" width="3.4" height="2.1" viewBox="0 0 3.4 2.1"><path d="M0 0l1.7 1.7l1.7 -1.7" fill="none" stroke="#aaa" stroke-width="0.7"/></svg>
<div style="left:129.30px;top:168.60px;width:627.70px;height:15.40px;background:#272727;border:0.6px solid #363636;border-radius:3px;"></div>
<div style="top:171.05px;height:11.1px;line-height:11.1px;font-size:7.4px;color:#f2f2f2;white-space:pre;letter-spacing:0.068px;left:137.00px;">AZ_vo_men_01</div>
<svg style="left:749.00px;top:175.80px;" width="4" height="2.4" viewBox="0 0 4 2.4"><path d="M0 0l2.0 2.0l2.0 -2.0" fill="none" stroke="#ddd" stroke-width="0.7"/></svg>
<div style="left:14.40px;top:187.50px;width:743.60px;height:243.00px;background:#0e0e0e;"></div>
<div style="left:31.20px;top:187.50px;width:78.50px;height:12.50px;background:#7a7a7a;"></div>
<svg style="left:22.50px;top:191.50px;" width="8" height="7.5" viewBox="0 0 8 7.5"><polygon points="8,0 8,7.5 0,7.5" fill="#8a8a8a"/></svg>
<div style="top:190.05px;height:7.5px;line-height:7.5px;font-size:5px;color:#fff;white-space:pre;font-weight:700;left:68.89px;">A</div>
<div style="top:190.05px;height:7.5px;line-height:7.5px;font-size:5px;color:#aaa;white-space:pre;left:187.18px;">B</div>
<div style="left:109.70px;top:189.50px;width:0.50px;height:10.00px;background:#333;"></div>
<div style="top:190.05px;height:7.5px;line-height:7.5px;font-size:5px;color:#aaa;white-space:pre;left:314.19px;">C</div>
<div style="left:268.00px;top:189.50px;width:0.50px;height:10.00px;background:#333;"></div>
<div style="top:190.05px;height:7.5px;line-height:7.5px;font-size:5px;color:#aaa;white-space:pre;left:440.69px;">D</div>
<div style="left:364.00px;top:189.50px;width:0.50px;height:10.00px;background:#333;"></div>
<div style="top:190.05px;height:7.5px;line-height:7.5px;font-size:5px;color:#aaa;white-space:pre;left:575.63px;">E</div>
<div style="left:521.00px;top:189.50px;width:0.50px;height:10.00px;background:#333;"></div>
<div style="top:190.05px;height:7.5px;line-height:7.5px;font-size:5px;color:#aaa;white-space:pre;left:679.37px;">F</div>
<div style="left:633.60px;top:189.50px;width:0.50px;height:10.00px;background:#333;"></div>
<div style="top:190.05px;height:7.5px;line-height:7.5px;font-size:5px;color:#aaa;white-space:pre;left:744.55px;">G</div>
<div style="left:728.20px;top:189.50px;width:0.50px;height:10.00px;background:#333;"></div>
<div style="left:31.70px;top:200.00px;width:717.30px;height:230.50px;background:#fff;"></div>
<div style="left:16px;top:200.10px;width:15px;height:13.03px;overflow:hidden;"><div style="left:0;top:0;width:15px;height:13px;line-height:13.4px;text-align:center;font-size:6.5px;font-weight:700;color:#e4e4e4;">1</div></div>
<div style="left:16.00px;top:212.83px;width:15.00px;height:0.50px;background:#2a2a2a;"></div>
<div style="left:16.00px;top:213.13px;width:15.00px;height:13.03px;background:#7a7a7a;"></div>
<div style="left:16px;top:213.13px;width:15px;height:13.03px;overflow:hidden;"><div style="left:0;top:0;width:15px;height:13px;line-height:13.4px;text-align:center;font-size:6.5px;font-weight:700;color:#e4e4e4;">2</div></div>
<div style="left:16.00px;top:225.86px;width:15.00px;height:0.50px;background:#2a2a2a;"></div>
<div style="left:16px;top:226.16px;width:15px;height:13.03px;overflow:hidden;"><div style="left:0;top:0;width:15px;height:13px;line-height:13.4px;text-align:center;font-size:6.5px;font-weight:700;color:#e4e4e4;">3</div></div>
<div style="left:16.00px;top:238.89px;width:15.00px;height:0.50px;background:#2a2a2a;"></div>
<div style="left:16px;top:239.19px;width:15px;height:13.03px;overflow:hidden;"><div style="left:0;top:0;width:15px;height:13px;line-height:13.4px;text-align:center;font-size:6.5px;font-weight:700;color:#e4e4e4;">4</div></div>
<div style="left:16.00px;top:251.92px;width:15.00px;height:0.50px;background:#2a2a2a;"></div>
<div style="left:16px;top:252.22px;width:15px;height:13.03px;overflow:hidden;"><div style="left:0;top:0;width:15px;height:13px;line-height:13.4px;text-align:center;font-size:6.5px;font-weight:700;color:#e4e4e4;">5</div></div>
<div style="left:16.00px;top:264.95px;width:15.00px;height:0.50px;background:#2a2a2a;"></div>
<div style="left:16px;top:265.25px;width:15px;height:13.03px;overflow:hidden;"><div style="left:0;top:0;width:15px;height:13px;line-height:13.4px;text-align:center;font-size:6.5px;font-weight:700;color:#e4e4e4;">6</div></div>
<div style="left:16.00px;top:277.98px;width:15.00px;height:0.50px;background:#2a2a2a;"></div>
<div style="left:16px;top:278.28px;width:15px;height:13.03px;overflow:hidden;"><div style="left:0;top:0;width:15px;height:13px;line-height:13.4px;text-align:center;font-size:6.5px;font-weight:700;color:#e4e4e4;">7</div></div>
<div style="left:16.00px;top:291.01px;width:15.00px;height:0.50px;background:#2a2a2a;"></div>
<div style="left:16px;top:291.31px;width:15px;height:13.03px;overflow:hidden;"><div style="left:0;top:0;width:15px;height:13px;line-height:13.4px;text-align:center;font-size:6.5px;font-weight:700;color:#e4e4e4;">8</div></div>
<div style="left:16.00px;top:304.04px;width:15.00px;height:0.50px;background:#2a2a2a;"></div>
<div style="left:16px;top:304.34px;width:15px;height:13.03px;overflow:hidden;"><div style="left:0;top:0;width:15px;height:13px;line-height:13.4px;text-align:center;font-size:6.5px;font-weight:700;color:#e4e4e4;">9</div></div>
<div style="left:16.00px;top:317.07px;width:15.00px;height:0.50px;background:#2a2a2a;"></div>
<div style="left:16px;top:317.37px;width:15px;height:13.03px;overflow:hidden;"><div style="left:0;top:0;width:15px;height:13px;line-height:13.4px;text-align:center;font-size:6.5px;font-weight:700;color:#e4e4e4;">10</div></div>
<div style="left:16.00px;top:330.10px;width:15.00px;height:0.50px;background:#2a2a2a;"></div>
<div style="left:16px;top:330.40px;width:15px;height:13.03px;overflow:hidden;"><div style="left:0;top:0;width:15px;height:13px;line-height:13.4px;text-align:center;font-size:6.5px;font-weight:700;color:#e4e4e4;">11</div></div>
<div style="left:16.00px;top:343.13px;width:15.00px;height:0.50px;background:#2a2a2a;"></div>
<div style="left:16px;top:343.43px;width:15px;height:13.03px;overflow:hidden;"><div style="left:0;top:0;width:15px;height:13px;line-height:13.4px;text-align:center;font-size:6.5px;font-weight:700;color:#e4e4e4;">12</div></div>
<div style="left:16.00px;top:356.16px;width:15.00px;height:0.50px;background:#2a2a2a;"></div>
<div style="left:16px;top:356.46px;width:15px;height:13.03px;overflow:hidden;"><div style="left:0;top:0;width:15px;height:13px;line-height:13.4px;text-align:center;font-size:6.5px;font-weight:700;color:#e4e4e4;">13</div></div>
<div style="left:16.00px;top:369.19px;width:15.00px;height:0.50px;background:#2a2a2a;"></div>
<div style="left:16px;top:369.49px;width:15px;height:13.03px;overflow:hidden;"><div style="left:0;top:0;width:15px;height:13px;line-height:13.4px;text-align:center;font-size:6.5px;font-weight:700;color:#e4e4e4;">14</div></div>
<div style="left:16.00px;top:382.22px;width:15.00px;height:0.50px;background:#2a2a2a;"></div>
<div style="left:16px;top:382.52px;width:15px;height:13.03px;overflow:hidden;"><div style="left:0;top:0;width:15px;height:13px;line-height:13.4px;text-align:center;font-size:6.5px;font-weight:700;color:#e4e4e4;">15</div></div>
<div style="left:16.00px;top:395.25px;width:15.00px;height:0.50px;background:#2a2a2a;"></div>
<div style="left:16px;top:395.55px;width:15px;height:13.03px;overflow:hidden;"><div style="left:0;top:0;width:15px;height:13px;line-height:13.4px;text-align:center;font-size:6.5px;font-weight:700;color:#e4e4e4;">16</div></div>
<div style="left:16.00px;top:408.28px;width:15.00px;height:0.50px;background:#2a2a2a;"></div>
<div style="left:16px;top:408.58px;width:15px;height:13.03px;overflow:hidden;"><div style="left:0;top:0;width:15px;height:13px;line-height:13.4px;text-align:center;font-size:6.5px;font-weight:700;color:#e4e4e4;">17</div></div>
<div style="left:16.00px;top:421.31px;width:15.00px;height:0.50px;background:#2a2a2a;"></div>
<div style="left:16px;top:421.61px;width:15px;height:8.89px;overflow:hidden;"><div style="left:0;top:0;width:15px;height:13px;line-height:13.4px;text-align:center;font-size:6.5px;font-weight:700;color:#e4e4e4;">18</div></div>
<div style="left:16.00px;top:434.34px;width:15.00px;height:0.50px;background:#2a2a2a;"></div>
<div style="left:31.70px;top:200.10px;width:696.30px;height:13.03px;background:#7fc6e6;"></div>
<div style="top:201.22px;height:10.95px;line-height:10.95px;font-size:7.3px;color:#1f5cab;white-space:pre;font-weight:500;letter-spacing:0.303px;left:34.20px;">ファイル名</div>
<div style="top:201.22px;height:10.95px;line-height:10.95px;font-size:7.3px;color:#1f5cab;white-space:pre;font-weight:500;letter-spacing:0.036px;left:112.20px;">セリフ</div>
<div style="top:201.22px;height:10.95px;line-height:10.95px;font-size:7.3px;color:#1f5cab;white-space:pre;font-weight:500;letter-spacing:0.593px;left:270.50px;">目標ラウドネス(LUFS-M)</div>
<div style="top:201.22px;height:10.95px;line-height:10.95px;font-size:7.3px;color:#1f5cab;white-space:pre;font-weight:500;letter-spacing:0.430px;left:366.50px;">Wwiseサウンドパス</div>
<div style="top:201.22px;height:10.95px;line-height:10.95px;font-size:7.3px;color:#1f5cab;white-space:pre;font-weight:500;letter-spacing:0.430px;left:523.50px;">Wwiseイベントパス</div>
<div style="top:201.22px;height:10.95px;line-height:10.95px;font-size:7.3px;color:#1f5cab;white-space:pre;font-weight:500;letter-spacing:0.361px;left:636.10px;">Originalsリブフォルダ</div>
<div style="left:31.70px;top:356.06px;width:717.30px;height:0.80px;background:#d9d9d9;"></div>
<div style="left:31.70px;top:369.09px;width:717.30px;height:0.80px;background:#d9d9d9;"></div>
<div style="left:31.70px;top:382.12px;width:717.30px;height:0.80px;background:#d9d9d9;"></div>
<div style="left:31.70px;top:395.15px;width:717.30px;height:0.80px;background:#d9d9d9;"></div>
<div style="left:31.70px;top:408.18px;width:717.30px;height:0.80px;background:#d9d9d9;"></div>
<div style="left:31.70px;top:421.21px;width:717.30px;height:0.80px;background:#d9d9d9;"></div>
<div style="left:109.30px;top:343.43px;width:0.80px;height:87.07px;border-left:0.8px dotted #cfcfcf;"></div>
<div style="left:267.60px;top:343.43px;width:0.80px;height:87.07px;border-left:0.8px dotted #cfcfcf;"></div>
<div style="left:363.60px;top:343.43px;width:0.80px;height:87.07px;border-left:0.8px dotted #cfcfcf;"></div>
<div style="left:520.60px;top:343.43px;width:0.80px;height:87.07px;border-left:0.8px dotted #cfcfcf;"></div>
<div style="left:633.20px;top:343.43px;width:0.80px;height:87.07px;border-left:0.8px dotted #cfcfcf;"></div>
<div style="left:727.80px;top:343.43px;width:0.80px;height:87.07px;border-left:0.8px dotted #cfcfcf;"></div>
<div style="left:727.60px;top:200.00px;width:0.80px;height:143.43px;border-left:0.8px dotted #cfcfcf;"></div>
<div style="left:728.00px;top:212.73px;width:21.00px;height:0.80px;border-top:0.8px dotted #d4d4d4;"></div>
<div style="left:728.00px;top:225.76px;width:21.00px;height:0.80px;border-top:0.8px dotted #d4d4d4;"></div>
<div style="left:728.00px;top:238.79px;width:21.00px;height:0.80px;border-top:0.8px dotted #d4d4d4;"></div>
<div style="left:728.00px;top:251.82px;width:21.00px;height:0.80px;border-top:0.8px dotted #d4d4d4;"></div>
<div style="left:728.00px;top:264.85px;width:21.00px;height:0.80px;border-top:0.8px dotted #d4d4d4;"></div>
<div style="left:728.00px;top:277.88px;width:21.00px;height:0.80px;border-top:0.8px dotted #d4d4d4;"></div>
<div style="left:728.00px;top:290.91px;width:21.00px;height:0.80px;border-top:0.8px dotted #d4d4d4;"></div>
<div style="left:728.00px;top:303.94px;width:21.00px;height:0.80px;border-top:0.8px dotted #d4d4d4;"></div>
<div style="left:728.00px;top:316.97px;width:21.00px;height:0.80px;border-top:0.8px dotted #d4d4d4;"></div>
<div style="left:728.00px;top:330.00px;width:21.00px;height:0.80px;border-top:0.8px dotted #d4d4d4;"></div>
<div style="left:728.00px;top:343.03px;width:21.00px;height:0.80px;border-top:0.8px dotted #d4d4d4;"></div>
<div style="top:214.48px;height:11.1px;line-height:11.1px;font-size:7.4px;color:#3a3a3a;white-space:pre;letter-spacing:0.109px;left:33.70px;">AZ_vo_men_01</div>
<div style="top:214.48px;height:11.1px;line-height:11.1px;font-size:7.4px;color:#3a3a3a;white-space:pre;letter-spacing:0.258px;left:112.20px;">さぁ冒険の始まりだ！</div>
<div style="top:214.48px;height:11.1px;line-height:11.1px;font-size:7.4px;color:#3a3a3a;white-space:pre;left:352.31px;">-18</div>
<div style="top:214.48px;height:11.1px;line-height:11.1px;font-size:7.4px;color:#3a3a3a;white-space:pre;letter-spacing:0.383px;left:366.00px;">¥Actor-Mixer Hierarchy¥Voice¥men</div>
<div style="top:214.48px;height:11.1px;line-height:11.1px;font-size:7.4px;color:#3a3a3a;white-space:pre;letter-spacing:0.306px;left:524.00px;">¥Events¥Voice¥men</div>
<div style="top:214.48px;height:11.1px;line-height:11.1px;font-size:7.4px;color:#3a3a3a;white-space:pre;letter-spacing:0.325px;left:635.40px;">Voice¥men</div>
<div style="top:227.51px;height:11.1px;line-height:11.1px;font-size:7.4px;color:#3a3a3a;white-space:pre;letter-spacing:0.109px;left:33.70px;">AZ_vo_men_02</div>
<div style="top:227.51px;height:11.1px;line-height:11.1px;font-size:7.4px;color:#3a3a3a;white-space:pre;letter-spacing:0.275px;left:112.20px;">このボスを倒すしかない！</div>
<div style="top:227.51px;height:11.1px;line-height:11.1px;font-size:7.4px;color:#3a3a3a;white-space:pre;left:352.31px;">-18</div>
<div style="top:227.51px;height:11.1px;line-height:11.1px;font-size:7.4px;color:#3a3a3a;white-space:pre;letter-spacing:0.383px;left:366.00px;">¥Actor-Mixer Hierarchy¥Voice¥men</div>
<div style="top:227.51px;height:11.1px;line-height:11.1px;font-size:7.4px;color:#3a3a3a;white-space:pre;letter-spacing:0.306px;left:524.00px;">¥Events¥Voice¥men</div>
<div style="top:227.51px;height:11.1px;line-height:11.1px;font-size:7.4px;color:#3a3a3a;white-space:pre;letter-spacing:0.325px;left:635.40px;">Voice¥men</div>
<div style="top:240.54px;height:11.1px;line-height:11.1px;font-size:7.4px;color:#3a3a3a;white-space:pre;letter-spacing:0.109px;left:33.70px;">AZ_vo_men_03</div>
<div style="top:240.54px;height:11.1px;line-height:11.1px;font-size:7.4px;color:#3a3a3a;white-space:pre;letter-spacing:0.314px;left:112.20px;">仲間、困っているぞ　助けて！</div>
<div style="top:240.54px;height:11.1px;line-height:11.1px;font-size:7.4px;color:#3a3a3a;white-space:pre;left:352.31px;">-20</div>
<div style="top:240.54px;height:11.1px;line-height:11.1px;font-size:7.4px;color:#3a3a3a;white-space:pre;letter-spacing:0.383px;left:366.00px;">¥Actor-Mixer Hierarchy¥Voice¥men</div>
<div style="top:240.54px;height:11.1px;line-height:11.1px;font-size:7.4px;color:#3a3a3a;white-space:pre;letter-spacing:0.306px;left:524.00px;">¥Events¥Voice¥men</div>
<div style="top:240.54px;height:11.1px;line-height:11.1px;font-size:7.4px;color:#3a3a3a;white-space:pre;letter-spacing:0.325px;left:635.40px;">Voice¥men</div>
<div style="top:253.57px;height:11.1px;line-height:11.1px;font-size:7.4px;color:#3a3a3a;white-space:pre;letter-spacing:0.109px;left:33.70px;">AZ_vo_men_04</div>
<div style="top:253.57px;height:11.1px;line-height:11.1px;font-size:7.4px;color:#3a3a3a;white-space:pre;letter-spacing:0.267px;left:112.20px;">ここからが真の試練だ！</div>
<div style="top:253.57px;height:11.1px;line-height:11.1px;font-size:7.4px;color:#3a3a3a;white-space:pre;left:352.31px;">-20</div>
<div style="top:253.57px;height:11.1px;line-height:11.1px;font-size:7.4px;color:#3a3a3a;white-space:pre;letter-spacing:0.383px;left:366.00px;">¥Actor-Mixer Hierarchy¥Voice¥men</div>
<div style="top:253.57px;height:11.1px;line-height:11.1px;font-size:7.4px;color:#3a3a3a;white-space:pre;letter-spacing:0.306px;left:524.00px;">¥Events¥Voice¥men</div>
<div style="top:253.57px;height:11.1px;line-height:11.1px;font-size:7.4px;color:#3a3a3a;white-space:pre;letter-spacing:0.325px;left:635.40px;">Voice¥men</div>
<div style="top:266.60px;height:11.1px;line-height:11.1px;font-size:7.4px;color:#3a3a3a;white-space:pre;letter-spacing:0.109px;left:33.70px;">AZ_vo_men_05</div>
<div style="top:266.60px;height:11.1px;line-height:11.1px;font-size:7.4px;color:#3a3a3a;white-space:pre;letter-spacing:0.327px;left:112.20px;">敵はどこだ？待っているぞ！</div>
<div style="top:266.60px;height:11.1px;line-height:11.1px;font-size:7.4px;color:#3a3a3a;white-space:pre;left:352.31px;">-28</div>
<div style="top:266.60px;height:11.1px;line-height:11.1px;font-size:7.4px;color:#3a3a3a;white-space:pre;letter-spacing:0.383px;left:366.00px;">¥Actor-Mixer Hierarchy¥Voice¥men</div>
<div style="top:266.60px;height:11.1px;line-height:11.1px;font-size:7.4px;color:#3a3a3a;white-space:pre;letter-spacing:0.306px;left:524.00px;">¥Events¥Voice¥men</div>
<div style="top:266.60px;height:11.1px;line-height:11.1px;font-size:7.4px;color:#3a3a3a;white-space:pre;letter-spacing:0.325px;left:635.40px;">Voice¥men</div>
<div style="top:279.63px;height:11.1px;line-height:11.1px;font-size:7.4px;color:#3a3a3a;white-space:pre;letter-spacing:0.204px;left:33.70px;">AZ_vo_women_01</div>
<div style="top:279.63px;height:11.1px;line-height:11.1px;font-size:7.4px;color:#3a3a3a;white-space:pre;letter-spacing:0.297px;left:112.20px;">ボス撃破！新たなチャレンジだ！</div>
<div style="top:279.63px;height:11.1px;line-height:11.1px;font-size:7.4px;color:#3a3a3a;white-space:pre;left:352.31px;">-18</div>
<div style="top:279.63px;height:11.1px;line-height:11.1px;font-size:7.4px;color:#3a3a3a;white-space:pre;letter-spacing:0.392px;left:366.00px;">¥Actor-Mixer Hierarchy¥Voice¥women</div>
<div style="top:279.63px;height:11.1px;line-height:11.1px;font-size:7.4px;color:#3a3a3a;white-space:pre;letter-spacing:0.324px;left:524.00px;">¥Events¥Voice¥women</div>
<div style="top:279.63px;height:11.1px;line-height:11.1px;font-size:7.4px;color:#3a3a3a;white-space:pre;letter-spacing:0.362px;left:635.40px;">Voice¥women</div>
<div style="top:292.66px;height:11.1px;line-height:11.1px;font-size:7.4px;color:#3a3a3a;white-space:pre;letter-spacing:0.204px;left:33.70px;">AZ_vo_women_02</div>
<div style="top:292.66px;height:11.1px;line-height:11.1px;font-size:7.4px;color:#3a3a3a;white-space:pre;letter-spacing:0.281px;left:112.20px;">戦闘のテクニックを磨こう！</div>
<div style="top:292.66px;height:11.1px;line-height:11.1px;font-size:7.4px;color:#3a3a3a;white-space:pre;left:352.31px;">-18</div>
<div style="top:292.66px;height:11.1px;line-height:11.1px;font-size:7.4px;color:#3a3a3a;white-space:pre;letter-spacing:0.392px;left:366.00px;">¥Actor-Mixer Hierarchy¥Voice¥women</div>
<div style="top:292.66px;height:11.1px;line-height:11.1px;font-size:7.4px;color:#3a3a3a;white-space:pre;letter-spacing:0.324px;left:524.00px;">¥Events¥Voice¥women</div>
<div style="top:292.66px;height:11.1px;line-height:11.1px;font-size:7.4px;color:#3a3a3a;white-space:pre;letter-spacing:0.362px;left:635.40px;">Voice¥women</div>
<div style="top:305.69px;height:11.1px;line-height:11.1px;font-size:7.4px;color:#3a3a3a;white-space:pre;letter-spacing:0.204px;left:33.70px;">AZ_vo_women_03</div>
<div style="top:305.69px;height:11.1px;line-height:11.1px;font-size:7.4px;color:#3a3a3a;white-space:pre;letter-spacing:0.303px;left:112.20px;">クエストを受ける前に準備を整えよう！</div>
<div style="top:305.69px;height:11.1px;line-height:11.1px;font-size:7.4px;color:#3a3a3a;white-space:pre;left:352.31px;">-20</div>
<div style="top:305.69px;height:11.1px;line-height:11.1px;font-size:7.4px;color:#3a3a3a;white-space:pre;letter-spacing:0.392px;left:366.00px;">¥Actor-Mixer Hierarchy¥Voice¥women</div>
<div style="top:305.69px;height:11.1px;line-height:11.1px;font-size:7.4px;color:#3a3a3a;white-space:pre;letter-spacing:0.324px;left:524.00px;">¥Events¥Voice¥women</div>
<div style="top:305.69px;height:11.1px;line-height:11.1px;font-size:7.4px;color:#3a3a3a;white-space:pre;letter-spacing:0.362px;left:635.40px;">Voice¥women</div>
<div style="top:318.72px;height:11.1px;line-height:11.1px;font-size:7.4px;color:#3a3a3a;white-space:pre;letter-spacing:0.204px;left:33.70px;">AZ_vo_women_04</div>
<div style="top:318.72px;height:11.1px;line-height:11.1px;font-size:7.4px;color:#3a3a3a;white-space:pre;letter-spacing:0.281px;left:112.20px;">ヒーローになるための道だ！</div>
<div style="top:318.72px;height:11.1px;line-height:11.1px;font-size:7.4px;color:#3a3a3a;white-space:pre;left:352.31px;">-20</div>
<div style="top:318.72px;height:11.1px;line-height:11.1px;font-size:7.4px;color:#3a3a3a;white-space:pre;letter-spacing:0.392px;left:366.00px;">¥Actor-Mixer Hierarchy¥Voice¥women</div>
<div style="top:318.72px;height:11.1px;line-height:11.1px;font-size:7.4px;color:#3a3a3a;white-space:pre;letter-spacing:0.324px;left:524.00px;">¥Events¥Voice¥women</div>
<div style="top:318.72px;height:11.1px;line-height:11.1px;font-size:7.4px;color:#3a3a3a;white-space:pre;letter-spacing:0.362px;left:635.40px;">Voice¥women</div>
<div style="top:331.75px;height:11.1px;line-height:11.1px;font-size:7.4px;color:#3a3a3a;white-space:pre;letter-spacing:0.204px;left:33.70px;">AZ_vo_women_05</div>
<div style="top:331.75px;height:11.1px;line-height:11.1px;font-size:7.4px;color:#3a3a3a;white-space:pre;letter-spacing:0.319px;left:112.20px;">このアビリティ、強力すぎる！</div>
<div style="top:331.75px;height:11.1px;line-height:11.1px;font-size:7.4px;color:#3a3a3a;white-space:pre;left:352.31px;">-28</div>
<div style="top:331.75px;height:11.1px;line-height:11.1px;font-size:7.4px;color:#3a3a3a;white-space:pre;letter-spacing:0.392px;left:366.00px;">¥Actor-Mixer Hierarchy¥Voice¥women</div>
<div style="top:331.75px;height:11.1px;line-height:11.1px;font-size:7.4px;color:#3a3a3a;white-space:pre;letter-spacing:0.324px;left:524.00px;">¥Events¥Voice¥women</div>
<div style="top:331.75px;height:11.1px;line-height:11.1px;font-size:7.4px;color:#3a3a3a;white-space:pre;letter-spacing:0.362px;left:635.40px;">Voice¥women</div>
<div style="left:31.70px;top:212.68px;width:696.30px;height:0.90px;background:#1a1a1a;"></div>
<div style="left:31.70px;top:225.71px;width:696.30px;height:0.90px;background:#1a1a1a;"></div>
<div style="left:31.70px;top:238.74px;width:696.30px;height:0.90px;background:#1a1a1a;"></div>
<div style="left:31.70px;top:251.77px;width:696.30px;height:0.90px;background:#1a1a1a;"></div>
<div style="left:31.70px;top:264.80px;width:696.30px;height:0.90px;background:#1a1a1a;"></div>
<div style="left:31.70px;top:277.83px;width:696.30px;height:0.90px;background:#1a1a1a;"></div>
<div style="left:31.70px;top:290.86px;width:696.30px;height:0.90px;background:#1a1a1a;"></div>
<div style="left:31.70px;top:303.89px;width:696.30px;height:0.90px;background:#1a1a1a;"></div>
<div style="left:31.70px;top:316.92px;width:696.30px;height:0.90px;background:#1a1a1a;"></div>
<div style="left:31.70px;top:329.95px;width:696.30px;height:0.90px;background:#1a1a1a;"></div>
<div style="left:31.70px;top:342.98px;width:696.30px;height:0.90px;background:#1a1a1a;"></div>
<div style="left:109.25px;top:200.10px;width:0.90px;height:143.33px;background:#1a1a1a;"></div>
<div style="left:267.55px;top:200.10px;width:0.90px;height:143.33px;background:#1a1a1a;"></div>
<div style="left:363.60px;top:200.10px;width:0.80px;height:143.33px;background:#8a8a8a;"></div>
<div style="left:520.60px;top:200.10px;width:0.80px;height:143.33px;background:#8a8a8a;"></div>
<div style="left:633.15px;top:200.10px;width:0.90px;height:143.33px;background:#1a1a1a;"></div>
<div style="left:727.75px;top:200.10px;width:0.90px;height:143.33px;background:#1a1a1a;"></div>
<div style="left:31.40px;top:212.53px;width:79.40px;height:14.23px;border:1.1px solid #1f7a48;"></div>
<div style="left:108.30px;top:224.56px;width:2.40px;height:2.40px;background:#1f7a48;border:0.4px solid #fff;"></div>
<svg style="left:517.50px;top:208.50px;" width="9" height="9" viewBox="0 0 9 9"><path d="M3 0h3v3h3v3h-3v3h-3v-3h-3v-3h3z" fill="#fff" stroke="#222" stroke-width="0.8"/></svg>
<div style="left:751.70px;top:197.00px;width:5.80px;height:188.00px;background:#929292;border-radius:2.5px;"></div>
<svg style="left:750.50px;top:190.00px;" width="6" height="4" viewBox="0 0 6 4"><polygon points="3,0 6,4 0,4" fill="#bbb"/></svg>
<svg style="left:751.00px;top:425.00px;" width="5" height="3.6" viewBox="0 0 5 3.6"><polygon points="0,0 5,0 2.5,3.6" fill="#aaa"/></svg>
<div style="left:14.40px;top:430.50px;width:745.70px;height:15.00px;background:#0a0a0a;"></div>
<svg style="left:29.50px;top:435.50px;" width="3" height="5" viewBox="0 0 3 5"><path d="M2.6 0l-2.3 2.5l2.3 2.5" fill="none" stroke="#777" stroke-width="0.7"/></svg>
<svg style="left:46.00px;top:435.50px;" width="3" height="5" viewBox="0 0 3 5"><path d="M0.4 0l2.3 2.5l-2.3 2.5" fill="none" stroke="#777" stroke-width="0.7"/></svg>
<div style="left:75.00px;top:430.20px;width:30.30px;height:14.20px;background:#fff;border-radius:0 0 3px 3px;"></div>
<div style="top:432.10px;height:10.2px;line-height:10.2px;font-size:6.8px;color:#333;white-space:pre;letter-spacing:0.458px;left:80.50px;">script</div>
<div style="left:80.00px;top:441.20px;width:20.00px;height:0.90px;background:#1f7a48;"></div>
<div style="top:431.88px;height:11.25px;line-height:11.25px;font-size:7.5px;color:#bbb;white-space:pre;left:129.80px;">+</div>
<div style="left:463.60px;top:435.50px;width:0.80px;height:0.80px;background:#bbb;"></div>
<div style="left:463.60px;top:437.50px;width:0.80px;height:0.80px;background:#bbb;"></div>
<div style="left:463.60px;top:439.50px;width:0.80px;height:0.80px;background:#bbb;"></div>
<svg style="left:474.80px;top:436.00px;" width="3" height="4.4" viewBox="0 0 3 4.4"><polygon points="3,0 3,4.4 0,2.2" fill="#aaa"/></svg>
<div style="left:481.00px;top:436.20px;width:229.00px;height:3.90px;background:#a6a6a6;border-radius:1.9px;"></div>
<svg style="left:744.50px;top:436.00px;" width="3.4" height="4.6" viewBox="0 0 3.4 4.6"><polygon points="0,0 3.4,2.3 0,4.6" fill="#aaa"/></svg>
<div style="left:14.40px;top:445.30px;width:745.70px;height:13.00px;background:#141414;border-radius:0 0 5px 5px;"></div>
<div style="left:20.00px;top:458.10px;width:736.00px;height:0.80px;background:#6a6a6a;"></div>
<div style="top:447.80px;height:9.0px;line-height:9.0px;font-size:6px;color:#f2f2f2;white-space:pre;letter-spacing:-0.004px;left:20.00px;">準備完了</div>
<svg style="left:55.50px;top:448.50px;" width="6" height="7" viewBox="0 0 6 7"><circle cx="3" cy="1.1" r="0.9" fill="#ddd"/><path d="M0.4 2.6h5.2M3 2.6v2M3 4.6l-1.6 2.2M3 4.6l1.6 2.2" fill="none" stroke="#ddd" stroke-width="0.7"/></svg>
<div style="top:447.88px;height:8.85px;line-height:8.85px;font-size:5.9px;color:#f2f2f2;white-space:pre;letter-spacing:-0.695px;left:64.00px;">アクセシビリティ: 問題ありません</div>
<div style="left:596.00px;top:446.30px;width:17.00px;height:11.40px;background:#383838;"></div>
<svg style="left:600.50px;top:448.50px;" width="8" height="7.5" viewBox="0 0 8 7.5"><rect x="0.4" y="0.4" width="7.2" height="6.7" fill="none" stroke="#ddd" stroke-width="0.7"/><path d="M0.4 2.6h7.2M0.4 4.8h7.2M2.8 0.4v6.7M5.2 0.4v6.7" stroke="#ddd" stroke-width="0.6"/></svg>
<svg style="left:622.00px;top:448.50px;" width="8" height="7.5" viewBox="0 0 8 7.5"><rect x="0.4" y="0.4" width="7.2" height="6.7" fill="none" stroke="#ccc" stroke-width="0.7"/><rect x="2" y="2" width="4" height="4.7" fill="none" stroke="#ccc" stroke-width="0.6"/></svg>
<svg style="left:642.80px;top:448.50px;" width="8" height="7.5" viewBox="0 0 8 7.5"><rect x="0.4" y="0.4" width="7.2" height="6.7" fill="none" stroke="#ccc" stroke-width="0.7"/><path d="M2.6 0.4v3.4h2.8v-3.4" fill="none" stroke="#ccc" stroke-width="0.6"/></svg>
<div style="left:660.50px;top:452.00px;width:3.00px;height:0.70px;background:#aaa;"></div>
<div style="left:667.00px;top:452.00px;width:53.00px;height:0.70px;background:#8a8a8a;"></div>
<div style="left:692.80px;top:449.00px;width:1.80px;height:6.60px;background:#ccc;"></div>
<div style="top:447.20px;height:9.6px;line-height:9.6px;font-size:6.4px;color:#ccc;white-space:pre;left:722.43px;">+</div>
<div style="top:447.95px;height:8.7px;line-height:8.7px;font-size:5.8px;color:#f2f2f2;white-space:pre;letter-spacing:0.418px;left:734.00px;">100%</div>
</div></body></html>
